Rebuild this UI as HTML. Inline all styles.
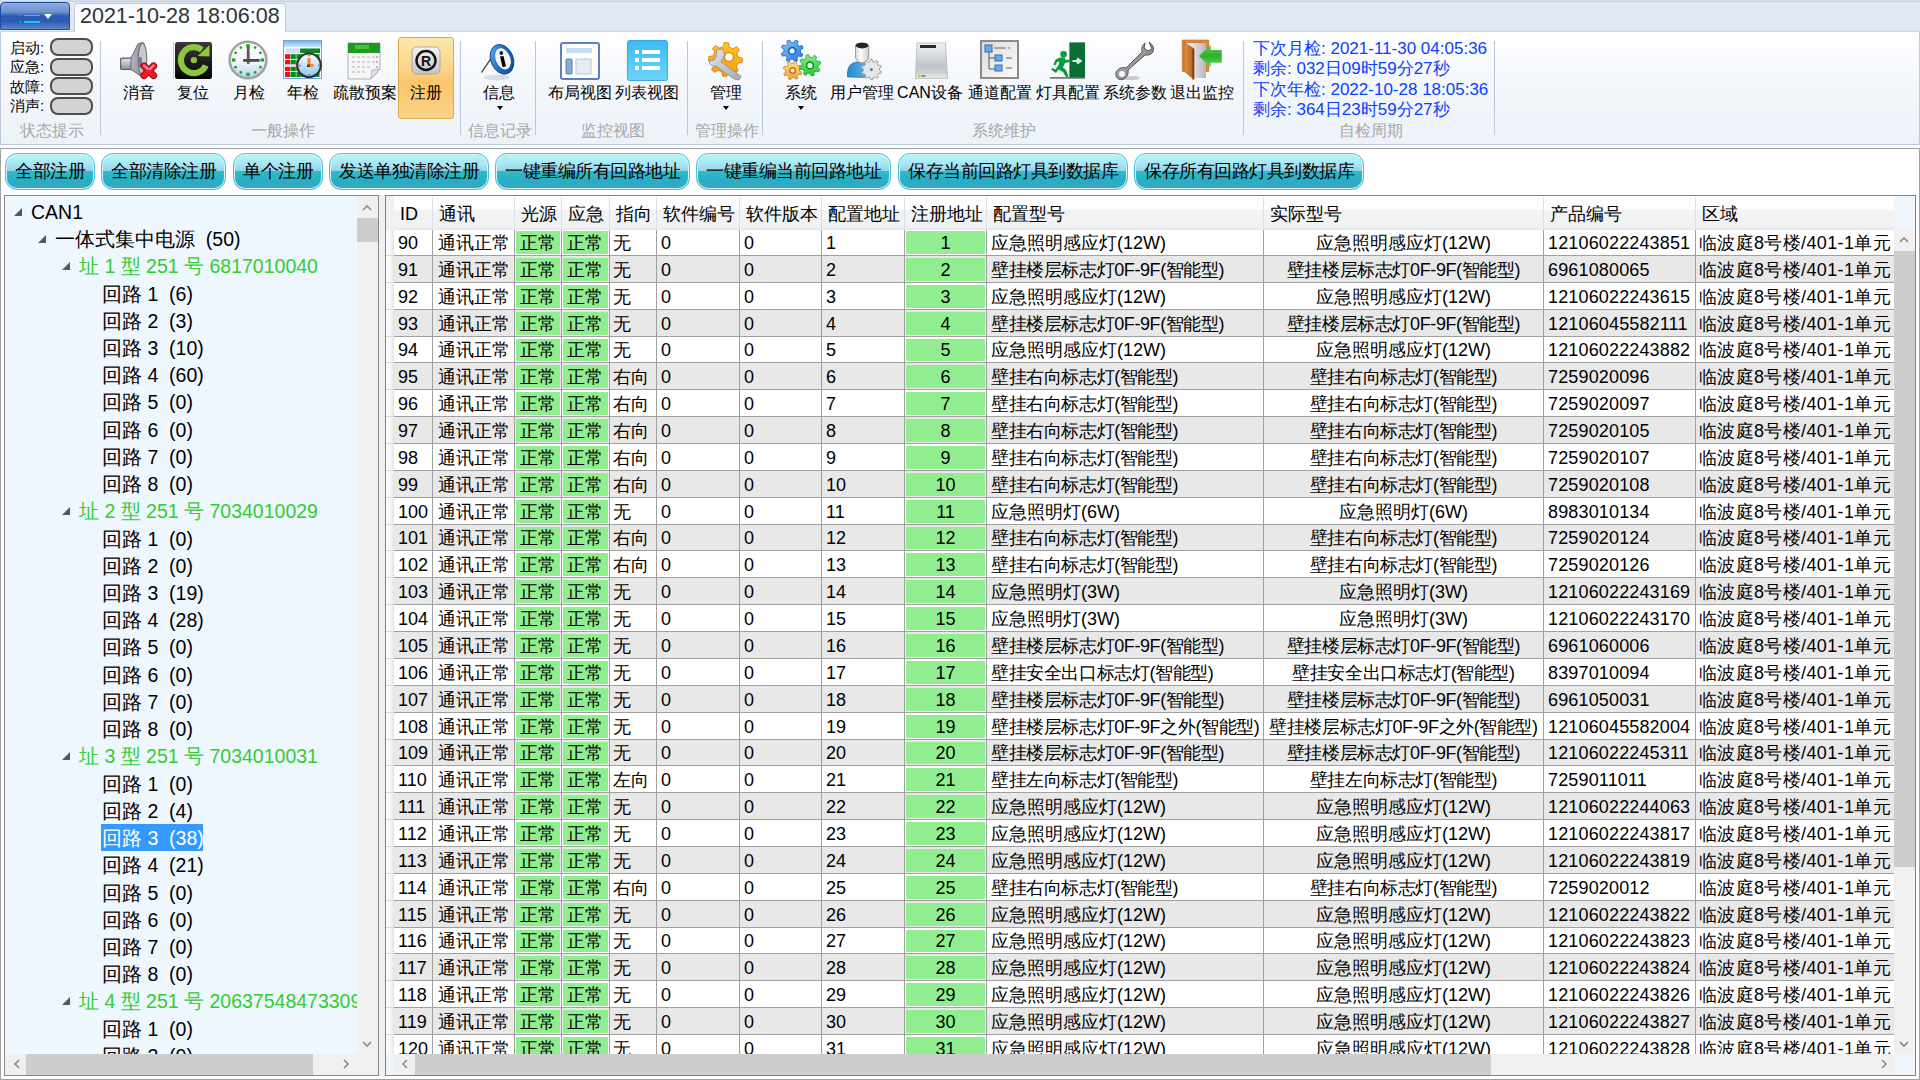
<!DOCTYPE html><html><head><meta charset="utf-8"><title>screen</title><style>
*{box-sizing:border-box}
html,body{margin:0;padding:0}
body{width:1920px;height:1080px;overflow:hidden;position:relative;background:#fff;font-family:"Liberation Sans",sans-serif;color:#000}
.a{position:absolute}
.t{position:absolute;white-space:pre;}
.c{position:absolute;white-space:pre;text-align:center}
.rl{position:absolute;white-space:pre;font-size:16px;line-height:16px;text-align:center;width:120px;color:#000}
.gl{position:absolute;white-space:pre;font-size:16px;line-height:16px;text-align:center;width:120px;color:#a7a7a7}
.sep{position:absolute;top:41px;width:1px;height:94px;background:#b8c8dc}
.led{position:absolute;left:50px;width:43px;height:18px;border:2px solid #4d4d4d;border-radius:8px;background:#d3d3d3}
.lab{position:absolute;left:10px;font-size:15px;line-height:16px;white-space:pre}
.btn{position:absolute;top:153px;height:37px;border:1px solid #4cc3dc;border-radius:12px;
 background:linear-gradient(#b8f5fc 0%,#a6e6f2 30%,#96d2e4 48%,#2cbccc 50%,#27afc4 75%,#3fa2bc 100%);
 box-shadow:inset 0 0 0 1px #d6f1f6;font-size:18px;letter-spacing:-0.5px;line-height:35px;text-align:center;white-space:pre;color:#000}
.tri{position:absolute;width:0;height:0;border-style:solid;border-width:0 0 8px 8px;border-color:transparent transparent #595959 transparent}
.ti{position:absolute;white-space:pre;font-size:19.5px;line-height:27px;height:27px}
.row{position:absolute;left:394px;width:1500px;overflow:hidden}
.cell{position:absolute;top:0;white-space:pre;font-size:18px;overflow:hidden}
.gc{position:absolute;background:#90ee90}
.vl{position:absolute;width:1px;background:#a0a0a0}
.hl{position:absolute;height:1px;background:#a0a0a0}
.hd{position:absolute;top:0;white-space:pre;font-size:18px;line-height:37px}
.hs{position:absolute;top:0;width:1px;height:33px;background:#dcdcdc}
.chev{position:absolute}
</style></head><body>
<div class="a" style="left:0;top:0;width:1920px;height:33px;background:#dfe8f4"></div>
<div class="a" style="left:0;top:0;width:1920px;height:1px;background:#d3dfec"></div>
<div class="a" style="left:0;top:1px;width:1920px;height:1px;background:#c3d2e3"></div>
<div class="a" style="left:0;top:31px;width:1920px;height:2px;background:#cbd8e7"></div>
<div class="a" style="left:0;top:2px;width:70px;height:28px;border:1.5px solid #1a4ea6;border-radius:4px 4px 0 0;background:linear-gradient(#93addc 0%,#6d90d0 35%,#2b5bb4 50%,#2a5ab2 70%,#5f86c8 100%)"></div>
<div class="a" style="left:24px;top:8.8px;width:16px;height:1.6px;background:#19c5ee"></div>
<div class="a" style="left:20px;top:8.8px;width:1px;height:1.6px;background:#19c5ee"></div>
<div class="a" style="left:24px;top:14.7px;width:16px;height:1.6px;background:#19c5ee"></div>
<div class="a" style="left:20px;top:14.7px;width:1px;height:1.6px;background:#19c5ee"></div>
<div class="a" style="left:24px;top:21.0px;width:16px;height:1.6px;background:#19c5ee"></div>
<div class="a" style="left:20px;top:21.0px;width:1px;height:1.6px;background:#19c5ee"></div>
<div class="a" style="left:44px;top:14px;width:0;height:0;border-left:4px solid transparent;border-right:4px solid transparent;border-top:5px solid #fff"></div>
<div class="a" style="left:74px;top:3px;width:212px;height:30px;border:1px solid #bccde0;border-bottom:none;border-radius:4px 4px 0 0;background:linear-gradient(#f7f9fc,#fdfeff)"></div>
<div class="t" style="left:80px;top:4px;font-size:21.5px;line-height:24px;color:#333">2021-10-28 18:06:08</div>
<div class="a" style="left:0;top:32px;width:1920px;height:113px;border:1px solid #bccbdd;border-top:none;background:linear-gradient(#ffffff 0%,#f5f8fc 35%,#edf2f9 100%)"></div>
<div class="led" style="top:38.0px"></div>
<div class="lab" style="top:39.5px">启动:</div>
<div class="led" style="top:57.6px"></div>
<div class="lab" style="top:59.1px">应急:</div>
<div class="led" style="top:77.2px"></div>
<div class="lab" style="top:78.7px">故障:</div>
<div class="led" style="top:96.8px"></div>
<div class="lab" style="top:98.3px">消声:</div>
<div class="sep" style="left:100px"></div>
<div class="sep" style="left:460px"></div>
<div class="sep" style="left:535px"></div>
<div class="sep" style="left:687px"></div>
<div class="sep" style="left:762px"></div>
<div class="sep" style="left:1243px"></div>
<div class="sep" style="left:1494px"></div>
<svg class="a" style="left:347px;top:42px" width="35" height="38" viewBox="0 0 35 38">
<path d="M1 1 L33 1 L33 27 L24 37 L1 37Z" fill="#f6f6f6" stroke="#b0b0b0"/>
<rect x="1" y="1" width="32" height="10" fill="#1c9a20"/>
<rect x="8" y="3" width="14" height="4" fill="#5cd04a" opacity=".7"/>
<g fill="#d4d4d4"><rect x="5" y="14" width="3" height="2"/><rect x="10" y="14" width="3" height="2"/><rect x="15" y="14" width="3" height="2"/><rect x="20" y="14" width="3" height="2"/><rect x="25" y="14" width="3" height="2"/>
<rect x="5" y="19" width="3" height="2"/><rect x="10" y="19" width="3" height="2"/><rect x="15" y="19" width="3" height="2"/><rect x="20" y="19" width="3" height="2"/><rect x="25" y="19" width="3" height="2"/>
<rect x="5" y="24" width="3" height="2"/><rect x="10" y="24" width="3" height="2"/><rect x="15" y="24" width="3" height="2"/><rect x="20" y="24" width="3" height="2"/>
<rect x="5" y="29" width="3" height="2"/><rect x="10" y="29" width="3" height="2"/><rect x="15" y="29" width="3" height="2"/></g>
<g fill="#c8a8f0"><rect x="29" y="14" width="2" height="2"/><rect x="29" y="19" width="2" height="2"/><rect x="29" y="24" width="2" height="2"/></g>
<path d="M33 27 L24 37 L25 28Z" fill="#dedede" stroke="#b0b0b0" stroke-width=".8"/>
</svg>
<div class="a" style="left:398px;top:37px;width:56px;height:82px;border:1px solid #d8ac48;border-radius:3px;background:linear-gradient(#fde7ac 0%,#fcd287 40%,#fbc56a 55%,#fcd388 100%)"></div>
<svg class="a" style="left:411px;top:46px" width="30" height="29" viewBox="0 0 30 29">
<defs><linearGradient id="rg" x1="0" y1="0" x2="0" y2="1"><stop offset="0" stop-color="#f4f4f4"/><stop offset="1" stop-color="#c4c4c4"/></linearGradient></defs>
<rect x="1" y="1" width="28" height="27" rx="5" fill="url(#rg)" stroke="#9a9a9a" stroke-width=".8"/>
<circle cx="15" cy="14.5" r="9.5" fill="none" stroke="#111" stroke-width="2.4"/>
<text x="15" y="19.5" font-family="Liberation Sans" font-weight="bold" font-size="14" text-anchor="middle" fill="#111">R</text>
</svg>
<svg class="a" style="left:560px;top:42px" width="41" height="38" viewBox="0 0 41 38">
<rect x="1" y="1" width="38" height="36" rx="2" fill="#fff" stroke="#5b80bc" stroke-width="2"/>
<rect x="6" y="6" width="26" height="5" rx="1" fill="#c4dcf4"/>
<rect x="6" y="17" width="6" height="15" rx="1" fill="#8aaad6" stroke="#5878b0"/>
<rect x="16" y="17" width="15" height="15" fill="#e6ecf6" stroke="#b8c4d4"/>
</svg>
<svg class="a" style="left:627px;top:40px" width="41" height="41" viewBox="0 0 41 41">
<defs><linearGradient id="lg" x1="0" y1="0" x2="0" y2="1"><stop offset="0" stop-color="#3cbcf4"/><stop offset="1" stop-color="#6cd4fa"/></linearGradient></defs>
<rect x="0.5" y="0.5" width="40" height="40" rx="2" fill="url(#lg)" stroke="#38a8e4"/>
<g fill="#fff"><rect x="8" y="10" width="4" height="4"/><rect x="15" y="10" width="18" height="4"/><rect x="8" y="18" width="4" height="4"/><rect x="15" y="18" width="18" height="4"/><rect x="8" y="26" width="4" height="4"/><rect x="15" y="26" width="18" height="4"/></g>
</svg>
<svg class="a" style="left:980px;top:40px" width="40" height="39" viewBox="0 0 40 39">
<defs><linearGradient id="chg" x1="0" y1="0" x2="1" y2="1"><stop offset="0" stop-color="#dcdcdc"/><stop offset="1" stop-color="#fafafa"/></linearGradient></defs>
<rect x="1" y="1" width="37" height="37" fill="url(#chg)" stroke="#8a8a8a" stroke-width="2"/>
<path d="M9 9 L9 29 M9 18 L16 18 M9 29 L16 29" stroke="#555" stroke-width="1" fill="none"/>
<g fill="#6aa8e6" stroke="#2e6cb8"><rect x="5" y="5" width="7" height="7"/><rect x="15" y="15" width="7" height="6"/><rect x="15" y="25" width="7" height="6"/></g>
<g stroke="#666" stroke-width="1"><line x1="14" y1="8" x2="26" y2="8"/><line x1="28" y1="8" x2="30" y2="8"/><line x1="26" y1="18" x2="32" y2="18"/><line x1="26" y1="28" x2="32" y2="28"/></g>
</svg>
<svg class="a" style="left:1115px;top:40px" width="41" height="42" viewBox="0 0 41 42">
<defs><linearGradient id="wg" x1="0" y1="0" x2="1" y2="1"><stop offset="0" stop-color="#c8c8c8"/><stop offset="1" stop-color="#6a6a6a"/></linearGradient></defs>
<path d="M34 2 Q40 6 38 12 Q35 16 30 15 L13 30 Q14 36 9 39 Q3 41 1 36 Q0 30 6 28 Q9 27 11 28 L27 12 Q26 6 30 3 L29 8 L33 11 L37 9Z" fill="url(#wg)" stroke="#555" stroke-width="1"/>
<circle cx="7" cy="34" r="3" fill="#f4f6fa"/>
<ellipse cx="16" cy="38" rx="9" ry="2" fill="#777" opacity=".35"/>
</svg>
<svg class="a" style="left:0;top:0" width="1920" height="150" viewBox="0 0 1920 150">
<defs>
<linearGradient id="spk2" x1="0" x2="0" y1="0" y2="1"><stop offset="0" stop-color="#e8e8f0"/><stop offset="1" stop-color="#8c8ca0"/></linearGradient>
<linearGradient id="cone2" x1="0" x2="1"><stop offset="0" stop-color="#dcdce6"/><stop offset="1" stop-color="#8a8a9c"/></linearGradient>
<linearGradient id="blk" x1="0" x2="0" y1="0" y2="1"><stop offset="0" stop-color="#3a3838"/><stop offset="1" stop-color="#050505"/></linearGradient>
<linearGradient id="face2" x1="0" x2="0" y1="0" y2="1"><stop offset="0" stop-color="#ffffff"/><stop offset="1" stop-color="#8cc4f0"/></linearGradient>
<linearGradient id="yhdr" x1="0" x2="0" y1="0" y2="1"><stop offset="0" stop-color="#7ab4ee"/><stop offset="1" stop-color="#cfe2f8"/></linearGradient>
<linearGradient id="infob" x1="0" x2="1" y1="0" y2="1"><stop offset="0" stop-color="#6ab4ea"/><stop offset=".5" stop-color="#1a6cc0"/><stop offset="1" stop-color="#0a4a94"/></linearGradient>
<linearGradient id="silver" x1="0" x2="1" y1="0" y2="1"><stop offset="0" stop-color="#e4e6ec"/><stop offset="1" stop-color="#a8aab4"/></linearGradient>
<linearGradient id="orng" x1="0" x2="0" y1="0" y2="1"><stop offset="0" stop-color="#ffc81a"/><stop offset="1" stop-color="#f49c10"/></linearGradient>
<linearGradient id="bgear" x1="0" x2="1" y1="0" y2="1"><stop offset="0" stop-color="#8ccaf4"/><stop offset="1" stop-color="#1a78dc"/></linearGradient>
<linearGradient id="ggear" x1="0" x2="0" y1="0" y2="1"><stop offset="0" stop-color="#8ee88e"/><stop offset="1" stop-color="#1ccc2a"/></linearGradient>
<linearGradient id="ogear" x1="0" x2="0" y1="0" y2="1"><stop offset="0" stop-color="#fde68a"/><stop offset="1" stop-color="#f0a030"/></linearGradient>
<linearGradient id="body" x1="0" x2="1"><stop offset="0" stop-color="#2a86d0"/><stop offset="1" stop-color="#5ab0ea"/></linearGradient>
<linearGradient id="head" x1="0" x2="1"><stop offset="0" stop-color="#d8d8d8"/><stop offset=".4" stop-color="#ffffff"/><stop offset="1" stop-color="#c8c8c8"/></linearGradient>
<linearGradient id="can2" x1="0" x2="0" y1="0" y2="1"><stop offset="0" stop-color="#f2f2f4"/><stop offset=".65" stop-color="#c0c4cc"/><stop offset="1" stop-color="#d8d8dc"/></linearGradient>
<linearGradient id="door2" x1="0" x2="1"><stop offset="0" stop-color="#f4f4f4"/><stop offset="1" stop-color="#b4b6bc"/></linearGradient>
<linearGradient id="leaf" x1="0" x2="1"><stop offset="0" stop-color="#e89040"/><stop offset="1" stop-color="#b8601c"/></linearGradient>
<linearGradient id="arw" x1="0" x2="0" y1="0" y2="1"><stop offset="0" stop-color="#5ccc54"/><stop offset=".5" stop-color="#2cb02c"/><stop offset="1" stop-color="#70d464"/></linearGradient>
</defs>
<path d="M120.5 59 Q120 58 122 58 L131 58 L138 44 Q141 42 144 43 L144 76 Q141 77 138 74 L131 69.5 L122 69.5 Q120.5 69.5 120.5 68Z" fill="url(#cone2)" stroke="#555" stroke-width="0.9"/>
<path d="M120.5 59 L131 58 L131 69.5 L121 69.5Z" fill="url(#spk2)" stroke="#555" stroke-width="0.8"/>
<ellipse cx="142.5" cy="59.5" rx="4.3" ry="16.3" fill="#c8c8d0" stroke="#666" stroke-width="1"/>
<rect x="138" y="57" width="4" height="10" rx="1.5" fill="#7a7a90"/>
<g stroke="#9a0c14" stroke-width="7.2" stroke-linecap="round"><line x1="144" y1="66" x2="153.5" y2="75.5"/><line x1="153.5" y1="66" x2="144" y2="75.5"/></g>
<g stroke="#f01c28" stroke-width="5.2" stroke-linecap="round"><line x1="144" y1="66" x2="153.5" y2="75.5"/><line x1="153.5" y1="66" x2="144" y2="75.5"/></g>
<g stroke="#ff9aa0" stroke-width="1.8" stroke-linecap="round"><line x1="144" y1="65.5" x2="148" y2="69"/><line x1="153.5" y1="65.5" x2="150" y2="69"/></g>
<rect x="173" y="42" width="1" height="37" fill="#c8c8cc"/>
<rect x="175" y="42" width="37" height="37" rx="2.5" fill="url(#blk)"/>
<path d="M201.90 49.86 A13 13 0 1 0 205.78 65.39" fill="none" stroke="#8cc63c" stroke-width="6.2"/>
<path d="M197.5 56 L209.5 45 L209.5 56.5Z" fill="#8cc63c"/>
<circle cx="193.9" cy="60.1" r="3.2" fill="#8cc63c"/>
<defs><linearGradient id="cface" x1="0" x2="0" y1="0" y2="1"><stop offset="0" stop-color="#ffffff"/><stop offset=".55" stop-color="#f2f6fc"/><stop offset="1" stop-color="#b4d2f2"/></linearGradient></defs>
<circle cx="248" cy="60" r="18.3" fill="url(#cface)" stroke="#a2a2a2" stroke-width="2.6"/>
<rect x="246.30" y="44.10" width="3.4" height="3.2" fill="#18a818"/>
<circle cx="255.15" cy="47.62" r="1.4" fill="#18a818"/>
<circle cx="260.38" cy="52.85" r="1.4" fill="#18a818"/>
<rect x="260.60" y="58.40" width="3.4" height="3.2" fill="#18a818"/>
<circle cx="260.38" cy="67.15" r="1.4" fill="#18a818"/>
<circle cx="255.15" cy="72.38" r="1.4" fill="#18a818"/>
<rect x="246.30" y="72.70" width="3.4" height="3.2" fill="#18a818"/>
<circle cx="240.85" cy="72.38" r="1.4" fill="#18a818"/>
<circle cx="235.62" cy="67.15" r="1.4" fill="#18a818"/>
<rect x="232.00" y="58.40" width="3.4" height="3.2" fill="#18a818"/>
<circle cx="235.62" cy="52.85" r="1.4" fill="#18a818"/>
<circle cx="240.85" cy="47.62" r="1.4" fill="#18a818"/>
<rect x="246.8" y="46.8" width="2.8" height="17" fill="#5a5a5a"/>
<rect x="243.2" y="59" width="16.5" height="2.8" fill="#4a4a4a"/>
<rect x="283.5" y="40.5" width="38" height="38" fill="#f4f8fe" stroke="#6aa6e8" stroke-width="1"/>
<rect x="284" y="41" width="37" height="6" fill="url(#yhdr)"/>
<rect x="286" y="48.5" width="13" height="4.5" fill="#cfdcf6"/>
<rect x="300" y="48.5" width="20" height="4.5" fill="#0a8a1a"/>
<rect x="285" y="54.2" width="5" height="4.7" fill="#f01010"/>
<rect x="290.5" y="54.2" width="29" height="4.7" fill="#0a8a1a"/>
<rect x="295.5" y="54.2" width="1.5" height="4.7" fill="#5cb86a"/>
<rect x="300.5" y="54.2" width="1.5" height="4.7" fill="#5cb86a"/>
<rect x="305.5" y="54.2" width="1.5" height="4.7" fill="#5cb86a"/>
<rect x="310.5" y="54.2" width="1.5" height="4.7" fill="#5cb86a"/>
<rect x="315.5" y="54.2" width="1.5" height="4.7" fill="#5cb86a"/>
<rect x="285" y="60.0" width="5" height="4.5" fill="#f01010"/>
<rect x="290.5" y="60.0" width="29" height="4.5" fill="#0a8a1a"/>
<rect x="295.5" y="60.0" width="1.5" height="4.5" fill="#5cb86a"/>
<rect x="300.5" y="60.0" width="1.5" height="4.5" fill="#5cb86a"/>
<rect x="305.5" y="60.0" width="1.5" height="4.5" fill="#5cb86a"/>
<rect x="310.5" y="60.0" width="1.5" height="4.5" fill="#5cb86a"/>
<rect x="315.5" y="60.0" width="1.5" height="4.5" fill="#5cb86a"/>
<rect x="285" y="67.0" width="5" height="4.0" fill="#f01010"/>
<rect x="290.5" y="67.0" width="29" height="4.0" fill="#0a8a1a"/>
<rect x="295.5" y="67.0" width="1.5" height="4.0" fill="#5cb86a"/>
<rect x="300.5" y="67.0" width="1.5" height="4.0" fill="#5cb86a"/>
<rect x="305.5" y="67.0" width="1.5" height="4.0" fill="#5cb86a"/>
<rect x="310.5" y="67.0" width="1.5" height="4.0" fill="#5cb86a"/>
<rect x="315.5" y="67.0" width="1.5" height="4.0" fill="#5cb86a"/>
<rect x="285" y="72.0" width="5" height="5.0" fill="#f01010"/>
<rect x="290.5" y="72.0" width="29" height="5.0" fill="#0a8a1a"/>
<rect x="295.5" y="72.0" width="1.5" height="5.0" fill="#5cb86a"/>
<rect x="300.5" y="72.0" width="1.5" height="5.0" fill="#5cb86a"/>
<rect x="305.5" y="72.0" width="1.5" height="5.0" fill="#5cb86a"/>
<rect x="310.5" y="72.0" width="1.5" height="5.0" fill="#5cb86a"/>
<rect x="315.5" y="72.0" width="1.5" height="5.0" fill="#5cb86a"/>
<rect x="285" y="64.5" width="35" height="2.5" fill="#ecd4dc"/>
<circle cx="309" cy="65.3" r="11.8" fill="url(#face2)" stroke="#333" stroke-width="2.2"/>
<g fill="#888"><rect x="308" y="55" width="2" height="1.5"/><rect x="308" y="74" width="2" height="1.5"/><rect x="299" y="64.5" width="1.5" height="2"/><rect x="318" y="64.5" width="1.5" height="2"/></g>
<rect x="307.5" y="58" width="3" height="8" fill="#f08a28"/><rect x="310" y="64" width="3.5" height="3" fill="#f08a28"/><rect x="307" y="64.5" width="3" height="2.5" fill="#445"/>
<ellipse cx="497" cy="77.5" rx="13" ry="2.8" fill="#cfd6e0" opacity=".8"/>
<path d="M492 57 L481.5 72.5" stroke="#333" stroke-width="1.3"/>
<ellipse cx="502" cy="59.3" rx="11.2" ry="15.4" transform="rotate(-22 502 59.3)" fill="url(#infob)" stroke="#0a3c80" stroke-width=".8"/>
<ellipse cx="503" cy="58.8" rx="7.2" ry="11" transform="rotate(-22 503 58.8)" fill="#f6f4f2"/>
<circle cx="501.3" cy="53" r="1.9" fill="#222"/>
<path d="M500 56.5 L503.5 56 L506 66.5 L502.5 67Z" fill="#000"/>
<path d="M738.30 57.24 L742.45 58.14 L742.23 62.53 L738.02 63.01 L736.15 66.96 L738.45 70.52 L735.19 73.47 L731.87 70.83 L727.76 72.30 L726.86 76.45 L722.47 76.23 L721.99 72.02 L718.04 70.15 L714.48 72.45 L711.53 69.19 L714.17 65.87 L712.70 61.76 L708.55 60.86 L708.77 56.47 L712.98 55.99 L714.85 52.04 L712.55 48.48 L715.81 45.53 L719.13 48.17 L723.24 46.70 L724.14 42.55 L728.53 42.77 L729.01 46.98 L732.96 48.85 L736.52 46.55 L739.47 49.81 L736.83 53.13Z" fill="url(#orng)" stroke="#d07810" stroke-width=".8"/>
<circle cx="729" cy="57" r="4.5" fill="#fff" stroke="#e08a10" stroke-width="1.5"/>
<path d="M716.5 49.5 L723 49 L724.5 55 L721 62 L741 76 L739 80 L734 79 L716 66 Q710 67 709 61 L714 60 Q717 58 716.5 49.5Z" fill="url(#silver)" stroke="#8a8c96" stroke-width=".8"/>
<path d="M800.43 52.57 L802.92 54.15 L801.73 56.79 L798.90 55.97 L796.84 57.90 L797.48 60.78 L794.77 61.80 L793.35 59.22 L790.53 59.13 L788.95 61.62 L786.31 60.43 L787.13 57.60 L785.20 55.54 L782.32 56.18 L781.30 53.47 L783.88 52.05 L783.97 49.23 L781.48 47.65 L782.67 45.01 L785.50 45.83 L787.56 43.90 L786.92 41.02 L789.63 40.00 L791.05 42.58 L793.87 42.67 L795.45 40.18 L798.09 41.37 L797.27 44.20 L799.20 46.26 L802.08 45.62 L803.10 48.33 L800.52 49.75Z" fill="url(#bgear)" stroke="#1060c0" stroke-width=".8"/>
<circle cx="792.2" cy="50.9" r="3.4" fill="#e8f4fc" stroke="#0a5ab8" stroke-width="1.6"/>
<path d="M799.57 71.20 L801.82 72.31 L801.05 74.62 L798.58 74.14 L797.03 75.92 L797.84 78.30 L795.66 79.39 L794.25 77.30 L791.90 77.47 L790.79 79.72 L788.48 78.95 L788.96 76.48 L787.18 74.93 L784.80 75.74 L783.71 73.56 L785.80 72.15 L785.63 69.80 L783.38 68.69 L784.15 66.38 L786.62 66.86 L788.17 65.08 L787.36 62.70 L789.54 61.61 L790.95 63.70 L793.30 63.53 L794.41 61.28 L796.72 62.05 L796.24 64.52 L798.02 66.07 L800.40 65.26 L801.49 67.44 L799.40 68.85Z" fill="url(#ogear)" stroke="#d08020" stroke-width=".8"/>
<circle cx="792.6" cy="70.5" r="2.8" fill="#f4f4f4" stroke="#c07018" stroke-width="1.4"/>
<path d="M817.83 67.82 L819.97 69.55 L818.58 71.97 L816.01 70.98 L813.83 72.65 L814.12 75.38 L811.42 76.11 L810.31 73.59 L807.58 73.23 L805.85 75.37 L803.43 73.98 L804.42 71.41 L802.75 69.23 L800.02 69.52 L799.29 66.82 L801.81 65.71 L802.17 62.98 L800.03 61.25 L801.42 58.83 L803.99 59.82 L806.17 58.15 L805.88 55.42 L808.58 54.69 L809.69 57.21 L812.42 57.57 L814.15 55.43 L816.57 56.82 L815.58 59.39 L817.25 61.57 L819.98 61.28 L820.71 63.98 L818.19 65.09Z" fill="url(#ggear)" stroke="#20a030" stroke-width=".8"/>
<circle cx="810" cy="65.4" r="3.4" fill="#e8f8e8" stroke="#1a8a2a" stroke-width="1.6"/>
<path d="M847.5 77 Q846.5 66 853 63 Q857 61.5 860 62 L866 62 L866 77.5Z" fill="url(#body)" stroke="#1a5a98" stroke-width=".6"/>
<path d="M855.5 46 Q855.5 43 862 43 Q868.8 43 868.8 46 L868.8 58 Q866 63 862 63 Q858 63 855.5 58Z" fill="url(#head)" stroke="#888" stroke-width=".8"/>
<ellipse cx="862" cy="45.6" rx="6.3" ry="2.8" fill="#222"/>
<path d="M879.56 70.42 L881.44 71.38 L880.86 73.41 L878.75 73.23 L877.52 75.06 L878.48 76.94 L876.82 78.24 L875.22 76.86 L873.14 77.61 L872.81 79.70 L870.70 79.78 L870.22 77.72 L868.10 77.11 L866.60 78.60 L864.85 77.42 L865.68 75.47 L864.32 73.73 L862.23 74.06 L861.51 72.08 L863.32 70.99 L863.24 68.78 L861.36 67.82 L861.94 65.79 L864.05 65.97 L865.28 64.14 L864.32 62.26 L865.98 60.96 L867.58 62.34 L869.66 61.59 L869.99 59.50 L872.10 59.42 L872.58 61.48 L874.70 62.09 L876.20 60.60 L877.95 61.78 L877.12 63.73 L878.48 65.47 L880.57 65.14 L881.29 67.12 L879.48 68.21Z" fill="#e6e6e6" stroke="#8a8a8a" stroke-width=".8"/>
<circle cx="871.4" cy="69.6" r="1.5" fill="#3a8ad0"/>
<path d="M917 43 L945.5 43 L947.5 78.5 L915.5 78.5Z" fill="url(#can2)" stroke="#b4b4b8" stroke-width=".8"/>
<rect x="920" y="45" width="16" height="3" fill="#2a2a2a"/>
<rect x="916" y="74.3" width="31" height="4" fill="#e0e0e2"/>
<rect x="918" y="74.8" width="2.6" height="2.6" fill="#b8e030"/><rect x="921.5" y="75" width="4" height="2" fill="#909090"/>
<rect x="1050" y="77" width="35" height="1.8" fill="#7a7a7a"/>
<rect x="1069.4" y="42.4" width="15.6" height="35" fill="#0a6e32"/>
<path d="M1072.5 61 L1079 61 M1077 58.5 L1080.5 61 L1077 63.5" stroke="#e4ece6" stroke-width="2.2" fill="none"/>
<circle cx="1063.6" cy="54.2" r="3.3" fill="#0a9a40"/>
<path d="M1060 57.5 L1064.5 57.5 L1066 60 L1069.5 59.5 L1069.5 62 L1065 63 L1063 67.5 L1066 70 L1068.5 76.5 L1066 77 L1063 72 L1058.5 69.5 L1056 73 L1051 69.5 L1052.5 68 L1055.5 69.5 L1058.5 65 L1059.5 61.5 L1057 62 L1055.5 65.5 L1053.5 64.5 L1055.5 59.5Z" fill="#0a9a40"/>
<path d="M1182.2 40 L1208.8 40 L1208.8 71.6 L1206 71.6 L1206 43 L1185 43 L1185 71.6 L1182.2 71.6Z" fill="#dd8a3c" stroke="#b86a24" stroke-width=".6"/>
<rect x="1188" y="43" width="18" height="35" fill="url(#door2)"/>
<path d="M1184 42.4 L1194 48.8 L1194 79.4 L1184 71Z" fill="url(#leaf)" stroke="#9a5018" stroke-width=".6"/>
<rect x="1192.3" y="48.8" width="1.8" height="30.6" fill="#7a4418"/>
<path d="M1199 56 L1210.7 45 L1210.7 50 L1221.8 50 L1221.8 62.8 L1210.7 62.8 L1210.7 67.5Z" fill="url(#arw)"/>
</svg>
<div class="rl" style="left:78.5px;top:85px">消音</div>
<div class="rl" style="left:133.0px;top:85px">复位</div>
<div class="rl" style="left:188.5px;top:85px">月检</div>
<div class="rl" style="left:243.0px;top:85px">年检</div>
<div class="rl" style="left:305.0px;top:85px">疏散预案</div>
<div class="rl" style="left:365.5px;top:85px">注册</div>
<div class="rl" style="left:438.5px;top:85px">信息</div>
<div class="rl" style="left:519.5px;top:85px">布局视图</div>
<div class="rl" style="left:586.5px;top:85px">列表视图</div>
<div class="rl" style="left:665.8px;top:85px">管理</div>
<div class="rl" style="left:740.8px;top:85px">系统</div>
<div class="rl" style="left:802.3px;top:85px">用户管理</div>
<div class="rl" style="left:870.0px;top:85px">CAN设备</div>
<div class="rl" style="left:939.5px;top:85px">通道配置</div>
<div class="rl" style="left:1007.5px;top:85px">灯具配置</div>
<div class="rl" style="left:1074.5px;top:85px">系统参数</div>
<div class="rl" style="left:1142.0px;top:85px">退出监控</div>
<div class="a" style="left:496.5px;top:106px;width:0;height:0;border-left:3.5px solid transparent;border-right:3.5px solid transparent;border-top:4px solid #000"></div>
<div class="a" style="left:723.0px;top:106px;width:0;height:0;border-left:3.5px solid transparent;border-right:3.5px solid transparent;border-top:4px solid #000"></div>
<div class="a" style="left:797.5px;top:106px;width:0;height:0;border-left:3.5px solid transparent;border-right:3.5px solid transparent;border-top:4px solid #000"></div>
<div class="gl" style="left:-8.0px;top:123px">状态提示</div>
<div class="gl" style="left:222.5px;top:123px">一般操作</div>
<div class="gl" style="left:439.7px;top:123px">信息记录</div>
<div class="gl" style="left:553.0px;top:123px">监控视图</div>
<div class="gl" style="left:667.0px;top:123px">管理操作</div>
<div class="gl" style="left:944.0px;top:123px">系统维护</div>
<div class="gl" style="left:1310.5px;top:123px">自检周期</div>
<div class="t" style="left:1253px;top:39.5px;font-size:17px;line-height:18px;color:#0a40ff">下次月检: 2021-11-30 04:05:36</div>
<div class="t" style="left:1253px;top:60.0px;font-size:17px;line-height:18px;color:#0a40ff">剩余: 032日09时59分27秒</div>
<div class="t" style="left:1253px;top:80.5px;font-size:17px;line-height:18px;color:#0a40ff">下次年检: 2022-10-28 18:05:36</div>
<div class="t" style="left:1253px;top:101.0px;font-size:17px;line-height:18px;color:#0a40ff">剩余: 364日23时59分27秒</div>
<div class="a" style="left:0;top:148px;width:1920px;height:932px;border:1px solid #a0a0a0"></div>
<div class="btn" style="left:5px;width:90px">全部注册</div>
<div class="btn" style="left:101px;width:125px">全部清除注册</div>
<div class="btn" style="left:233px;width:90px">单个注册</div>
<div class="btn" style="left:329px;width:160px">发送单独清除注册</div>
<div class="btn" style="left:495px;width:195px">一键重编所有回路地址</div>
<div class="btn" style="left:696px;width:195px">一键重编当前回路地址</div>
<div class="btn" style="left:898px;width:230px">保存当前回路灯具到数据库</div>
<div class="btn" style="left:1134px;width:230px">保存所有回路灯具到数据库</div>
<div class="a" style="left:379px;top:195px;width:6px;height:881px;background:#f0f0f0"></div>
<div class="a" style="left:4px;top:195px;width:375px;height:881px;border:1px solid #828790;background:#eef6fe;overflow:hidden">
<div class="tri" style="left:9px;top:11.8px"></div>
<div class="ti" style="left:26px;top:2.8px;color:#000">CAN1</div>
<div class="tri" style="left:33px;top:39.0px"></div>
<div class="ti" style="left:50px;top:30.0px;color:#000">一体式集中电源  (50)</div>
<div class="tri" style="left:57px;top:66.3px"></div>
<div class="ti" style="left:74px;top:57.3px;color:#32cd32">址 1 型 251 号 6817010040</div>
<div class="ti" style="left:97px;top:84.5px;color:#000">回路 1  (6)</div>
<div class="ti" style="left:97px;top:111.7px;color:#000">回路 2  (3)</div>
<div class="ti" style="left:97px;top:138.9px;color:#000">回路 3  (10)</div>
<div class="ti" style="left:97px;top:166.2px;color:#000">回路 4  (60)</div>
<div class="ti" style="left:97px;top:193.4px;color:#000">回路 5  (0)</div>
<div class="ti" style="left:97px;top:220.6px;color:#000">回路 6  (0)</div>
<div class="ti" style="left:97px;top:247.9px;color:#000">回路 7  (0)</div>
<div class="ti" style="left:97px;top:275.1px;color:#000">回路 8  (0)</div>
<div class="tri" style="left:57px;top:311.3px"></div>
<div class="ti" style="left:74px;top:302.3px;color:#32cd32">址 2 型 251 号 7034010029</div>
<div class="ti" style="left:97px;top:329.5px;color:#000">回路 1  (0)</div>
<div class="ti" style="left:97px;top:356.8px;color:#000">回路 2  (0)</div>
<div class="ti" style="left:97px;top:384.0px;color:#000">回路 3  (19)</div>
<div class="ti" style="left:97px;top:411.2px;color:#000">回路 4  (28)</div>
<div class="ti" style="left:97px;top:438.4px;color:#000">回路 5  (0)</div>
<div class="ti" style="left:97px;top:465.7px;color:#000">回路 6  (0)</div>
<div class="ti" style="left:97px;top:492.9px;color:#000">回路 7  (0)</div>
<div class="ti" style="left:97px;top:520.1px;color:#000">回路 8  (0)</div>
<div class="tri" style="left:57px;top:556.3px"></div>
<div class="ti" style="left:74px;top:547.3px;color:#32cd32">址 3 型 251 号 7034010031</div>
<div class="ti" style="left:97px;top:574.6px;color:#000">回路 1  (0)</div>
<div class="ti" style="left:97px;top:601.8px;color:#000">回路 2  (4)</div>
<div class="a" style="left:96px;top:628.4px;width:102px;height:27px;background:#3399ff"></div>
<div class="ti" style="left:97px;top:629.0px;color:#fff">回路 3  (38)</div>
<div class="ti" style="left:97px;top:656.2px;color:#000">回路 4  (21)</div>
<div class="ti" style="left:97px;top:683.5px;color:#000">回路 5  (0)</div>
<div class="ti" style="left:97px;top:710.7px;color:#000">回路 6  (0)</div>
<div class="ti" style="left:97px;top:737.9px;color:#000">回路 7  (0)</div>
<div class="ti" style="left:97px;top:765.1px;color:#000">回路 8  (0)</div>
<div class="tri" style="left:57px;top:801.4px"></div>
<div class="ti" style="left:74px;top:792.4px;color:#32cd32">址 4 型 251 号 20637548473309</div>
<div class="ti" style="left:97px;top:819.6px;color:#000">回路 1  (0)</div>
<div class="ti" style="left:97px;top:846.8px;color:#000">回路 2  (0)</div>
</div>
<div class="a" style="left:357px;top:196px;width:21px;height:858px;background:#f0f0f0"></div>
<div class="a" style="left:357px;top:218px;width:21px;height:24px;background:#cdcdcd"></div>
<div class="a" style="left:5px;top:1054px;width:373px;height:21px;background:#f0f0f0"></div>
<div class="a" style="left:26px;top:1054px;width:287px;height:21px;background:#cdcdcd"></div>
<svg class="a" style="left:0;top:0;pointer-events:none" width="1920" height="1080"><path d="M363.0 210.0 L367.0 206.0 L371.0 210.0" fill="none" stroke="#8a8a8a" stroke-width="1.6"/><path d="M363.0 1042.0 L367.0 1046.0 L371.0 1042.0" fill="none" stroke="#8a8a8a" stroke-width="1.6"/><path d="M19.0 1060.0 L15.0 1064.0 L19.0 1068.0" fill="none" stroke="#8a8a8a" stroke-width="1.6"/><path d="M344.0 1060.0 L348.0 1064.0 L344.0 1068.0" fill="none" stroke="#8a8a8a" stroke-width="1.6"/></svg>
<div class="a" style="left:385px;top:195px;width:1531px;height:881px;border:1px solid #5f86b6;background:#fff"></div>
<div class="a" style="left:386px;top:196px;width:8px;height:858px;background:linear-gradient(to right,#ffffff,#f6f6f6 60%,#e2e2e2)"></div>
<div class="a" style="left:386px;top:196px;width:8px;height:34px;background:#f0f0f0"></div>
<div class="a" style="left:386px;top:1054px;width:8px;height:21px;background:#eef5fc"></div>
<div class="a" style="left:394px;top:196px;width:1500px;height:34px;background:linear-gradient(#fdfdfd 0%,#fdfdfd 40%,#f1f2f4 42%,#f1f2f4 92%,#e2e3e6 100%)"></div>
<div class="hd" style="left:400px;top:196px">ID</div>
<div class="hd" style="left:439px;top:196px">通讯</div>
<div class="a" style="left:432px;top:197px;width:1px;height:32px;background:#dedfe2"></div>
<div class="hd" style="left:521px;top:196px">光源</div>
<div class="a" style="left:514px;top:197px;width:1px;height:32px;background:#dedfe2"></div>
<div class="hd" style="left:568px;top:196px">应急</div>
<div class="a" style="left:561px;top:197px;width:1px;height:32px;background:#dedfe2"></div>
<div class="hd" style="left:616px;top:196px">指向</div>
<div class="a" style="left:609px;top:197px;width:1px;height:32px;background:#dedfe2"></div>
<div class="hd" style="left:663px;top:196px">软件编号</div>
<div class="a" style="left:656px;top:197px;width:1px;height:32px;background:#dedfe2"></div>
<div class="hd" style="left:746px;top:196px">软件版本</div>
<div class="a" style="left:739px;top:197px;width:1px;height:32px;background:#dedfe2"></div>
<div class="hd" style="left:828px;top:196px">配置地址</div>
<div class="a" style="left:821px;top:197px;width:1px;height:32px;background:#dedfe2"></div>
<div class="hd" style="left:911px;top:196px">注册地址</div>
<div class="a" style="left:904px;top:197px;width:1px;height:32px;background:#dedfe2"></div>
<div class="hd" style="left:993px;top:196px">配置型号</div>
<div class="a" style="left:986px;top:197px;width:1px;height:32px;background:#dedfe2"></div>
<div class="hd" style="left:1270px;top:196px">实际型号</div>
<div class="a" style="left:1263px;top:197px;width:1px;height:32px;background:#dedfe2"></div>
<div class="hd" style="left:1550px;top:196px">产品编号</div>
<div class="a" style="left:1543px;top:197px;width:1px;height:32px;background:#dedfe2"></div>
<div class="hd" style="left:1702px;top:196px">区域</div>
<div class="a" style="left:1695px;top:197px;width:1px;height:32px;background:#dedfe2"></div>
<div class="a" style="left:1894px;top:196px;width:21px;height:34px;background:#eef5fc"></div>
<div class="a" style="left:386px;top:230px;width:1508px;height:824px;overflow:hidden">
<div class="a" style="left:8px;top:0px;width:1500px;height:25px;background:#ffffff"></div>
<div class="a" style="left:8px;top:25px;width:1500px;height:1px;background:#a0a0a0"></div>
<div class="a" style="left:0;top:25px;width:8px;height:1px;background:#dcdcdc"></div>
<div class="gc" style="left:130px;top:1px;width:44px;height:23px"></div>
<div class="gc" style="left:177px;top:1px;width:45px;height:23px"></div>
<div class="gc" style="left:520px;top:1px;width:79px;height:23px"></div>
<div class="vl" style="left:46px;top:0px;height:26px"></div>
<div class="vl" style="left:128px;top:0px;height:26px"></div>
<div class="vl" style="left:175px;top:0px;height:26px"></div>
<div class="vl" style="left:223px;top:0px;height:26px"></div>
<div class="vl" style="left:270px;top:0px;height:26px"></div>
<div class="vl" style="left:353px;top:0px;height:26px"></div>
<div class="vl" style="left:435px;top:0px;height:26px"></div>
<div class="vl" style="left:518px;top:0px;height:26px"></div>
<div class="vl" style="left:600px;top:0px;height:26px"></div>
<div class="vl" style="left:877px;top:0px;height:26px"></div>
<div class="vl" style="left:1157px;top:0px;height:26px"></div>
<div class="vl" style="left:1309px;top:0px;height:26px"></div>
<div class="cell" style="left:12px;top:0px;line-height:27px;height:25px;">90</div>
<div class="cell" style="left:52px;top:0px;line-height:27px;height:25px;">通讯正常</div>
<div class="cell" style="left:134px;top:0px;line-height:27px;height:25px;">正常</div>
<div class="cell" style="left:181px;top:0px;line-height:27px;height:25px;">正常</div>
<div class="cell" style="left:227px;top:0px;line-height:27px;height:25px;">无</div>
<div class="cell" style="left:275px;top:0px;line-height:27px;height:25px;">0</div>
<div class="cell" style="left:358px;top:0px;line-height:27px;height:25px;">0</div>
<div class="cell" style="left:440px;top:0px;line-height:27px;height:25px;">1</div>
<div class="cell" style="left:520px;top:0px;width:79px;text-align:center;line-height:27px;height:25px">1</div>
<div class="cell" style="left:605px;top:0px;line-height:27px;height:25px;">应急照明感应灯(12W)</div>
<div class="cell" style="left:878px;top:0px;width:279px;text-align:center;line-height:27px;height:25px;">应急照明感应灯(12W)</div>
<div class="cell" style="left:1162px;top:0px;line-height:27px;height:25px;letter-spacing:0.15px">12106022243851</div>
<div class="cell" style="left:1313px;top:0px;line-height:27px;height:25px;letter-spacing:0.35px">临波庭8号楼/401-1单元</div>
<div class="a" style="left:8px;top:26px;width:1500px;height:26px;background:#e8e8e8"></div>
<div class="a" style="left:8px;top:52px;width:1500px;height:1px;background:#a0a0a0"></div>
<div class="a" style="left:0;top:52px;width:8px;height:1px;background:#dcdcdc"></div>
<div class="gc" style="left:130px;top:28px;width:44px;height:23px"></div>
<div class="gc" style="left:177px;top:28px;width:45px;height:23px"></div>
<div class="gc" style="left:520px;top:28px;width:79px;height:23px"></div>
<div class="vl" style="left:46px;top:26px;height:27px"></div>
<div class="vl" style="left:128px;top:26px;height:27px"></div>
<div class="vl" style="left:175px;top:26px;height:27px"></div>
<div class="vl" style="left:223px;top:26px;height:27px"></div>
<div class="vl" style="left:270px;top:26px;height:27px"></div>
<div class="vl" style="left:353px;top:26px;height:27px"></div>
<div class="vl" style="left:435px;top:26px;height:27px"></div>
<div class="vl" style="left:518px;top:26px;height:27px"></div>
<div class="vl" style="left:600px;top:26px;height:27px"></div>
<div class="vl" style="left:877px;top:26px;height:27px"></div>
<div class="vl" style="left:1157px;top:26px;height:27px"></div>
<div class="vl" style="left:1309px;top:26px;height:27px"></div>
<div class="cell" style="left:12px;top:26px;line-height:28px;height:26px;">91</div>
<div class="cell" style="left:52px;top:26px;line-height:28px;height:26px;">通讯正常</div>
<div class="cell" style="left:134px;top:26px;line-height:28px;height:26px;">正常</div>
<div class="cell" style="left:181px;top:26px;line-height:28px;height:26px;">正常</div>
<div class="cell" style="left:227px;top:26px;line-height:28px;height:26px;">无</div>
<div class="cell" style="left:275px;top:26px;line-height:28px;height:26px;">0</div>
<div class="cell" style="left:358px;top:26px;line-height:28px;height:26px;">0</div>
<div class="cell" style="left:440px;top:26px;line-height:28px;height:26px;">2</div>
<div class="cell" style="left:520px;top:26px;width:79px;text-align:center;line-height:28px;height:26px">2</div>
<div class="cell" style="left:605px;top:26px;line-height:28px;height:26px;letter-spacing:-0.4px">壁挂楼层标志灯0F-9F(智能型)</div>
<div class="cell" style="left:878px;top:26px;width:279px;text-align:center;line-height:28px;height:26px;letter-spacing:-0.4px">壁挂楼层标志灯0F-9F(智能型)</div>
<div class="cell" style="left:1162px;top:26px;line-height:28px;height:26px;letter-spacing:0.15px">6961080065</div>
<div class="cell" style="left:1313px;top:26px;line-height:28px;height:26px;letter-spacing:0.35px">临波庭8号楼/401-1单元</div>
<div class="a" style="left:8px;top:53px;width:1500px;height:26px;background:#ffffff"></div>
<div class="a" style="left:8px;top:79px;width:1500px;height:1px;background:#a0a0a0"></div>
<div class="a" style="left:0;top:79px;width:8px;height:1px;background:#dcdcdc"></div>
<div class="gc" style="left:130px;top:55px;width:44px;height:23px"></div>
<div class="gc" style="left:177px;top:55px;width:45px;height:23px"></div>
<div class="gc" style="left:520px;top:55px;width:79px;height:23px"></div>
<div class="vl" style="left:46px;top:53px;height:27px"></div>
<div class="vl" style="left:128px;top:53px;height:27px"></div>
<div class="vl" style="left:175px;top:53px;height:27px"></div>
<div class="vl" style="left:223px;top:53px;height:27px"></div>
<div class="vl" style="left:270px;top:53px;height:27px"></div>
<div class="vl" style="left:353px;top:53px;height:27px"></div>
<div class="vl" style="left:435px;top:53px;height:27px"></div>
<div class="vl" style="left:518px;top:53px;height:27px"></div>
<div class="vl" style="left:600px;top:53px;height:27px"></div>
<div class="vl" style="left:877px;top:53px;height:27px"></div>
<div class="vl" style="left:1157px;top:53px;height:27px"></div>
<div class="vl" style="left:1309px;top:53px;height:27px"></div>
<div class="cell" style="left:12px;top:53px;line-height:28px;height:26px;">92</div>
<div class="cell" style="left:52px;top:53px;line-height:28px;height:26px;">通讯正常</div>
<div class="cell" style="left:134px;top:53px;line-height:28px;height:26px;">正常</div>
<div class="cell" style="left:181px;top:53px;line-height:28px;height:26px;">正常</div>
<div class="cell" style="left:227px;top:53px;line-height:28px;height:26px;">无</div>
<div class="cell" style="left:275px;top:53px;line-height:28px;height:26px;">0</div>
<div class="cell" style="left:358px;top:53px;line-height:28px;height:26px;">0</div>
<div class="cell" style="left:440px;top:53px;line-height:28px;height:26px;">3</div>
<div class="cell" style="left:520px;top:53px;width:79px;text-align:center;line-height:28px;height:26px">3</div>
<div class="cell" style="left:605px;top:53px;line-height:28px;height:26px;">应急照明感应灯(12W)</div>
<div class="cell" style="left:878px;top:53px;width:279px;text-align:center;line-height:28px;height:26px;">应急照明感应灯(12W)</div>
<div class="cell" style="left:1162px;top:53px;line-height:28px;height:26px;letter-spacing:0.15px">12106022243615</div>
<div class="cell" style="left:1313px;top:53px;line-height:28px;height:26px;letter-spacing:0.35px">临波庭8号楼/401-1单元</div>
<div class="a" style="left:8px;top:80px;width:1500px;height:26px;background:#e8e8e8"></div>
<div class="a" style="left:8px;top:106px;width:1500px;height:1px;background:#a0a0a0"></div>
<div class="a" style="left:0;top:106px;width:8px;height:1px;background:#dcdcdc"></div>
<div class="gc" style="left:130px;top:82px;width:44px;height:23px"></div>
<div class="gc" style="left:177px;top:82px;width:45px;height:23px"></div>
<div class="gc" style="left:520px;top:82px;width:79px;height:23px"></div>
<div class="vl" style="left:46px;top:80px;height:27px"></div>
<div class="vl" style="left:128px;top:80px;height:27px"></div>
<div class="vl" style="left:175px;top:80px;height:27px"></div>
<div class="vl" style="left:223px;top:80px;height:27px"></div>
<div class="vl" style="left:270px;top:80px;height:27px"></div>
<div class="vl" style="left:353px;top:80px;height:27px"></div>
<div class="vl" style="left:435px;top:80px;height:27px"></div>
<div class="vl" style="left:518px;top:80px;height:27px"></div>
<div class="vl" style="left:600px;top:80px;height:27px"></div>
<div class="vl" style="left:877px;top:80px;height:27px"></div>
<div class="vl" style="left:1157px;top:80px;height:27px"></div>
<div class="vl" style="left:1309px;top:80px;height:27px"></div>
<div class="cell" style="left:12px;top:80px;line-height:28px;height:26px;">93</div>
<div class="cell" style="left:52px;top:80px;line-height:28px;height:26px;">通讯正常</div>
<div class="cell" style="left:134px;top:80px;line-height:28px;height:26px;">正常</div>
<div class="cell" style="left:181px;top:80px;line-height:28px;height:26px;">正常</div>
<div class="cell" style="left:227px;top:80px;line-height:28px;height:26px;">无</div>
<div class="cell" style="left:275px;top:80px;line-height:28px;height:26px;">0</div>
<div class="cell" style="left:358px;top:80px;line-height:28px;height:26px;">0</div>
<div class="cell" style="left:440px;top:80px;line-height:28px;height:26px;">4</div>
<div class="cell" style="left:520px;top:80px;width:79px;text-align:center;line-height:28px;height:26px">4</div>
<div class="cell" style="left:605px;top:80px;line-height:28px;height:26px;letter-spacing:-0.4px">壁挂楼层标志灯0F-9F(智能型)</div>
<div class="cell" style="left:878px;top:80px;width:279px;text-align:center;line-height:28px;height:26px;letter-spacing:-0.4px">壁挂楼层标志灯0F-9F(智能型)</div>
<div class="cell" style="left:1162px;top:80px;line-height:28px;height:26px;letter-spacing:0.15px">12106045582111</div>
<div class="cell" style="left:1313px;top:80px;line-height:28px;height:26px;letter-spacing:0.35px">临波庭8号楼/401-1单元</div>
<div class="a" style="left:8px;top:107px;width:1500px;height:25px;background:#ffffff"></div>
<div class="a" style="left:8px;top:132px;width:1500px;height:1px;background:#a0a0a0"></div>
<div class="a" style="left:0;top:132px;width:8px;height:1px;background:#dcdcdc"></div>
<div class="gc" style="left:130px;top:109px;width:44px;height:22px"></div>
<div class="gc" style="left:177px;top:109px;width:45px;height:22px"></div>
<div class="gc" style="left:520px;top:109px;width:79px;height:22px"></div>
<div class="vl" style="left:46px;top:107px;height:26px"></div>
<div class="vl" style="left:128px;top:107px;height:26px"></div>
<div class="vl" style="left:175px;top:107px;height:26px"></div>
<div class="vl" style="left:223px;top:107px;height:26px"></div>
<div class="vl" style="left:270px;top:107px;height:26px"></div>
<div class="vl" style="left:353px;top:107px;height:26px"></div>
<div class="vl" style="left:435px;top:107px;height:26px"></div>
<div class="vl" style="left:518px;top:107px;height:26px"></div>
<div class="vl" style="left:600px;top:107px;height:26px"></div>
<div class="vl" style="left:877px;top:107px;height:26px"></div>
<div class="vl" style="left:1157px;top:107px;height:26px"></div>
<div class="vl" style="left:1309px;top:107px;height:26px"></div>
<div class="cell" style="left:12px;top:107px;line-height:27px;height:25px;">94</div>
<div class="cell" style="left:52px;top:107px;line-height:27px;height:25px;">通讯正常</div>
<div class="cell" style="left:134px;top:107px;line-height:27px;height:25px;">正常</div>
<div class="cell" style="left:181px;top:107px;line-height:27px;height:25px;">正常</div>
<div class="cell" style="left:227px;top:107px;line-height:27px;height:25px;">无</div>
<div class="cell" style="left:275px;top:107px;line-height:27px;height:25px;">0</div>
<div class="cell" style="left:358px;top:107px;line-height:27px;height:25px;">0</div>
<div class="cell" style="left:440px;top:107px;line-height:27px;height:25px;">5</div>
<div class="cell" style="left:520px;top:107px;width:79px;text-align:center;line-height:27px;height:25px">5</div>
<div class="cell" style="left:605px;top:107px;line-height:27px;height:25px;">应急照明感应灯(12W)</div>
<div class="cell" style="left:878px;top:107px;width:279px;text-align:center;line-height:27px;height:25px;">应急照明感应灯(12W)</div>
<div class="cell" style="left:1162px;top:107px;line-height:27px;height:25px;letter-spacing:0.15px">12106022243882</div>
<div class="cell" style="left:1313px;top:107px;line-height:27px;height:25px;letter-spacing:0.35px">临波庭8号楼/401-1单元</div>
<div class="a" style="left:8px;top:133px;width:1500px;height:26px;background:#e8e8e8"></div>
<div class="a" style="left:8px;top:159px;width:1500px;height:1px;background:#a0a0a0"></div>
<div class="a" style="left:0;top:159px;width:8px;height:1px;background:#dcdcdc"></div>
<div class="gc" style="left:130px;top:135px;width:44px;height:23px"></div>
<div class="gc" style="left:177px;top:135px;width:45px;height:23px"></div>
<div class="gc" style="left:520px;top:135px;width:79px;height:23px"></div>
<div class="vl" style="left:46px;top:133px;height:27px"></div>
<div class="vl" style="left:128px;top:133px;height:27px"></div>
<div class="vl" style="left:175px;top:133px;height:27px"></div>
<div class="vl" style="left:223px;top:133px;height:27px"></div>
<div class="vl" style="left:270px;top:133px;height:27px"></div>
<div class="vl" style="left:353px;top:133px;height:27px"></div>
<div class="vl" style="left:435px;top:133px;height:27px"></div>
<div class="vl" style="left:518px;top:133px;height:27px"></div>
<div class="vl" style="left:600px;top:133px;height:27px"></div>
<div class="vl" style="left:877px;top:133px;height:27px"></div>
<div class="vl" style="left:1157px;top:133px;height:27px"></div>
<div class="vl" style="left:1309px;top:133px;height:27px"></div>
<div class="cell" style="left:12px;top:133px;line-height:28px;height:26px;">95</div>
<div class="cell" style="left:52px;top:133px;line-height:28px;height:26px;">通讯正常</div>
<div class="cell" style="left:134px;top:133px;line-height:28px;height:26px;">正常</div>
<div class="cell" style="left:181px;top:133px;line-height:28px;height:26px;">正常</div>
<div class="cell" style="left:227px;top:133px;line-height:28px;height:26px;">右向</div>
<div class="cell" style="left:275px;top:133px;line-height:28px;height:26px;">0</div>
<div class="cell" style="left:358px;top:133px;line-height:28px;height:26px;">0</div>
<div class="cell" style="left:440px;top:133px;line-height:28px;height:26px;">6</div>
<div class="cell" style="left:520px;top:133px;width:79px;text-align:center;line-height:28px;height:26px">6</div>
<div class="cell" style="left:605px;top:133px;line-height:28px;height:26px;letter-spacing:-0.4px">壁挂右向标志灯(智能型)</div>
<div class="cell" style="left:878px;top:133px;width:279px;text-align:center;line-height:28px;height:26px;letter-spacing:-0.4px">壁挂右向标志灯(智能型)</div>
<div class="cell" style="left:1162px;top:133px;line-height:28px;height:26px;letter-spacing:0.15px">7259020096</div>
<div class="cell" style="left:1313px;top:133px;line-height:28px;height:26px;letter-spacing:0.35px">临波庭8号楼/401-1单元</div>
<div class="a" style="left:8px;top:160px;width:1500px;height:26px;background:#ffffff"></div>
<div class="a" style="left:8px;top:186px;width:1500px;height:1px;background:#a0a0a0"></div>
<div class="a" style="left:0;top:186px;width:8px;height:1px;background:#dcdcdc"></div>
<div class="gc" style="left:130px;top:162px;width:44px;height:23px"></div>
<div class="gc" style="left:177px;top:162px;width:45px;height:23px"></div>
<div class="gc" style="left:520px;top:162px;width:79px;height:23px"></div>
<div class="vl" style="left:46px;top:160px;height:27px"></div>
<div class="vl" style="left:128px;top:160px;height:27px"></div>
<div class="vl" style="left:175px;top:160px;height:27px"></div>
<div class="vl" style="left:223px;top:160px;height:27px"></div>
<div class="vl" style="left:270px;top:160px;height:27px"></div>
<div class="vl" style="left:353px;top:160px;height:27px"></div>
<div class="vl" style="left:435px;top:160px;height:27px"></div>
<div class="vl" style="left:518px;top:160px;height:27px"></div>
<div class="vl" style="left:600px;top:160px;height:27px"></div>
<div class="vl" style="left:877px;top:160px;height:27px"></div>
<div class="vl" style="left:1157px;top:160px;height:27px"></div>
<div class="vl" style="left:1309px;top:160px;height:27px"></div>
<div class="cell" style="left:12px;top:160px;line-height:28px;height:26px;">96</div>
<div class="cell" style="left:52px;top:160px;line-height:28px;height:26px;">通讯正常</div>
<div class="cell" style="left:134px;top:160px;line-height:28px;height:26px;">正常</div>
<div class="cell" style="left:181px;top:160px;line-height:28px;height:26px;">正常</div>
<div class="cell" style="left:227px;top:160px;line-height:28px;height:26px;">右向</div>
<div class="cell" style="left:275px;top:160px;line-height:28px;height:26px;">0</div>
<div class="cell" style="left:358px;top:160px;line-height:28px;height:26px;">0</div>
<div class="cell" style="left:440px;top:160px;line-height:28px;height:26px;">7</div>
<div class="cell" style="left:520px;top:160px;width:79px;text-align:center;line-height:28px;height:26px">7</div>
<div class="cell" style="left:605px;top:160px;line-height:28px;height:26px;letter-spacing:-0.4px">壁挂右向标志灯(智能型)</div>
<div class="cell" style="left:878px;top:160px;width:279px;text-align:center;line-height:28px;height:26px;letter-spacing:-0.4px">壁挂右向标志灯(智能型)</div>
<div class="cell" style="left:1162px;top:160px;line-height:28px;height:26px;letter-spacing:0.15px">7259020097</div>
<div class="cell" style="left:1313px;top:160px;line-height:28px;height:26px;letter-spacing:0.35px">临波庭8号楼/401-1单元</div>
<div class="a" style="left:8px;top:187px;width:1500px;height:26px;background:#e8e8e8"></div>
<div class="a" style="left:8px;top:213px;width:1500px;height:1px;background:#a0a0a0"></div>
<div class="a" style="left:0;top:213px;width:8px;height:1px;background:#dcdcdc"></div>
<div class="gc" style="left:130px;top:189px;width:44px;height:23px"></div>
<div class="gc" style="left:177px;top:189px;width:45px;height:23px"></div>
<div class="gc" style="left:520px;top:189px;width:79px;height:23px"></div>
<div class="vl" style="left:46px;top:187px;height:27px"></div>
<div class="vl" style="left:128px;top:187px;height:27px"></div>
<div class="vl" style="left:175px;top:187px;height:27px"></div>
<div class="vl" style="left:223px;top:187px;height:27px"></div>
<div class="vl" style="left:270px;top:187px;height:27px"></div>
<div class="vl" style="left:353px;top:187px;height:27px"></div>
<div class="vl" style="left:435px;top:187px;height:27px"></div>
<div class="vl" style="left:518px;top:187px;height:27px"></div>
<div class="vl" style="left:600px;top:187px;height:27px"></div>
<div class="vl" style="left:877px;top:187px;height:27px"></div>
<div class="vl" style="left:1157px;top:187px;height:27px"></div>
<div class="vl" style="left:1309px;top:187px;height:27px"></div>
<div class="cell" style="left:12px;top:187px;line-height:28px;height:26px;">97</div>
<div class="cell" style="left:52px;top:187px;line-height:28px;height:26px;">通讯正常</div>
<div class="cell" style="left:134px;top:187px;line-height:28px;height:26px;">正常</div>
<div class="cell" style="left:181px;top:187px;line-height:28px;height:26px;">正常</div>
<div class="cell" style="left:227px;top:187px;line-height:28px;height:26px;">右向</div>
<div class="cell" style="left:275px;top:187px;line-height:28px;height:26px;">0</div>
<div class="cell" style="left:358px;top:187px;line-height:28px;height:26px;">0</div>
<div class="cell" style="left:440px;top:187px;line-height:28px;height:26px;">8</div>
<div class="cell" style="left:520px;top:187px;width:79px;text-align:center;line-height:28px;height:26px">8</div>
<div class="cell" style="left:605px;top:187px;line-height:28px;height:26px;letter-spacing:-0.4px">壁挂右向标志灯(智能型)</div>
<div class="cell" style="left:878px;top:187px;width:279px;text-align:center;line-height:28px;height:26px;letter-spacing:-0.4px">壁挂右向标志灯(智能型)</div>
<div class="cell" style="left:1162px;top:187px;line-height:28px;height:26px;letter-spacing:0.15px">7259020105</div>
<div class="cell" style="left:1313px;top:187px;line-height:28px;height:26px;letter-spacing:0.35px">临波庭8号楼/401-1单元</div>
<div class="a" style="left:8px;top:214px;width:1500px;height:26px;background:#ffffff"></div>
<div class="a" style="left:8px;top:240px;width:1500px;height:1px;background:#a0a0a0"></div>
<div class="a" style="left:0;top:240px;width:8px;height:1px;background:#dcdcdc"></div>
<div class="gc" style="left:130px;top:216px;width:44px;height:23px"></div>
<div class="gc" style="left:177px;top:216px;width:45px;height:23px"></div>
<div class="gc" style="left:520px;top:216px;width:79px;height:23px"></div>
<div class="vl" style="left:46px;top:214px;height:27px"></div>
<div class="vl" style="left:128px;top:214px;height:27px"></div>
<div class="vl" style="left:175px;top:214px;height:27px"></div>
<div class="vl" style="left:223px;top:214px;height:27px"></div>
<div class="vl" style="left:270px;top:214px;height:27px"></div>
<div class="vl" style="left:353px;top:214px;height:27px"></div>
<div class="vl" style="left:435px;top:214px;height:27px"></div>
<div class="vl" style="left:518px;top:214px;height:27px"></div>
<div class="vl" style="left:600px;top:214px;height:27px"></div>
<div class="vl" style="left:877px;top:214px;height:27px"></div>
<div class="vl" style="left:1157px;top:214px;height:27px"></div>
<div class="vl" style="left:1309px;top:214px;height:27px"></div>
<div class="cell" style="left:12px;top:214px;line-height:28px;height:26px;">98</div>
<div class="cell" style="left:52px;top:214px;line-height:28px;height:26px;">通讯正常</div>
<div class="cell" style="left:134px;top:214px;line-height:28px;height:26px;">正常</div>
<div class="cell" style="left:181px;top:214px;line-height:28px;height:26px;">正常</div>
<div class="cell" style="left:227px;top:214px;line-height:28px;height:26px;">右向</div>
<div class="cell" style="left:275px;top:214px;line-height:28px;height:26px;">0</div>
<div class="cell" style="left:358px;top:214px;line-height:28px;height:26px;">0</div>
<div class="cell" style="left:440px;top:214px;line-height:28px;height:26px;">9</div>
<div class="cell" style="left:520px;top:214px;width:79px;text-align:center;line-height:28px;height:26px">9</div>
<div class="cell" style="left:605px;top:214px;line-height:28px;height:26px;letter-spacing:-0.4px">壁挂右向标志灯(智能型)</div>
<div class="cell" style="left:878px;top:214px;width:279px;text-align:center;line-height:28px;height:26px;letter-spacing:-0.4px">壁挂右向标志灯(智能型)</div>
<div class="cell" style="left:1162px;top:214px;line-height:28px;height:26px;letter-spacing:0.15px">7259020107</div>
<div class="cell" style="left:1313px;top:214px;line-height:28px;height:26px;letter-spacing:0.35px">临波庭8号楼/401-1单元</div>
<div class="a" style="left:8px;top:241px;width:1500px;height:26px;background:#e8e8e8"></div>
<div class="a" style="left:8px;top:267px;width:1500px;height:1px;background:#a0a0a0"></div>
<div class="a" style="left:0;top:267px;width:8px;height:1px;background:#dcdcdc"></div>
<div class="gc" style="left:130px;top:243px;width:44px;height:23px"></div>
<div class="gc" style="left:177px;top:243px;width:45px;height:23px"></div>
<div class="gc" style="left:520px;top:243px;width:79px;height:23px"></div>
<div class="vl" style="left:46px;top:241px;height:27px"></div>
<div class="vl" style="left:128px;top:241px;height:27px"></div>
<div class="vl" style="left:175px;top:241px;height:27px"></div>
<div class="vl" style="left:223px;top:241px;height:27px"></div>
<div class="vl" style="left:270px;top:241px;height:27px"></div>
<div class="vl" style="left:353px;top:241px;height:27px"></div>
<div class="vl" style="left:435px;top:241px;height:27px"></div>
<div class="vl" style="left:518px;top:241px;height:27px"></div>
<div class="vl" style="left:600px;top:241px;height:27px"></div>
<div class="vl" style="left:877px;top:241px;height:27px"></div>
<div class="vl" style="left:1157px;top:241px;height:27px"></div>
<div class="vl" style="left:1309px;top:241px;height:27px"></div>
<div class="cell" style="left:12px;top:241px;line-height:28px;height:26px;">99</div>
<div class="cell" style="left:52px;top:241px;line-height:28px;height:26px;">通讯正常</div>
<div class="cell" style="left:134px;top:241px;line-height:28px;height:26px;">正常</div>
<div class="cell" style="left:181px;top:241px;line-height:28px;height:26px;">正常</div>
<div class="cell" style="left:227px;top:241px;line-height:28px;height:26px;">右向</div>
<div class="cell" style="left:275px;top:241px;line-height:28px;height:26px;">0</div>
<div class="cell" style="left:358px;top:241px;line-height:28px;height:26px;">0</div>
<div class="cell" style="left:440px;top:241px;line-height:28px;height:26px;">10</div>
<div class="cell" style="left:520px;top:241px;width:79px;text-align:center;line-height:28px;height:26px">10</div>
<div class="cell" style="left:605px;top:241px;line-height:28px;height:26px;letter-spacing:-0.4px">壁挂右向标志灯(智能型)</div>
<div class="cell" style="left:878px;top:241px;width:279px;text-align:center;line-height:28px;height:26px;letter-spacing:-0.4px">壁挂右向标志灯(智能型)</div>
<div class="cell" style="left:1162px;top:241px;line-height:28px;height:26px;letter-spacing:0.15px">7259020108</div>
<div class="cell" style="left:1313px;top:241px;line-height:28px;height:26px;letter-spacing:0.35px">临波庭8号楼/401-1单元</div>
<div class="a" style="left:8px;top:268px;width:1500px;height:26px;background:#ffffff"></div>
<div class="a" style="left:8px;top:294px;width:1500px;height:1px;background:#a0a0a0"></div>
<div class="a" style="left:0;top:294px;width:8px;height:1px;background:#dcdcdc"></div>
<div class="gc" style="left:130px;top:270px;width:44px;height:23px"></div>
<div class="gc" style="left:177px;top:270px;width:45px;height:23px"></div>
<div class="gc" style="left:520px;top:270px;width:79px;height:23px"></div>
<div class="vl" style="left:46px;top:268px;height:27px"></div>
<div class="vl" style="left:128px;top:268px;height:27px"></div>
<div class="vl" style="left:175px;top:268px;height:27px"></div>
<div class="vl" style="left:223px;top:268px;height:27px"></div>
<div class="vl" style="left:270px;top:268px;height:27px"></div>
<div class="vl" style="left:353px;top:268px;height:27px"></div>
<div class="vl" style="left:435px;top:268px;height:27px"></div>
<div class="vl" style="left:518px;top:268px;height:27px"></div>
<div class="vl" style="left:600px;top:268px;height:27px"></div>
<div class="vl" style="left:877px;top:268px;height:27px"></div>
<div class="vl" style="left:1157px;top:268px;height:27px"></div>
<div class="vl" style="left:1309px;top:268px;height:27px"></div>
<div class="cell" style="left:12px;top:268px;line-height:28px;height:26px;">100</div>
<div class="cell" style="left:52px;top:268px;line-height:28px;height:26px;">通讯正常</div>
<div class="cell" style="left:134px;top:268px;line-height:28px;height:26px;">正常</div>
<div class="cell" style="left:181px;top:268px;line-height:28px;height:26px;">正常</div>
<div class="cell" style="left:227px;top:268px;line-height:28px;height:26px;">无</div>
<div class="cell" style="left:275px;top:268px;line-height:28px;height:26px;">0</div>
<div class="cell" style="left:358px;top:268px;line-height:28px;height:26px;">0</div>
<div class="cell" style="left:440px;top:268px;line-height:28px;height:26px;">11</div>
<div class="cell" style="left:520px;top:268px;width:79px;text-align:center;line-height:28px;height:26px">11</div>
<div class="cell" style="left:605px;top:268px;line-height:28px;height:26px;">应急照明灯(6W)</div>
<div class="cell" style="left:878px;top:268px;width:279px;text-align:center;line-height:28px;height:26px;">应急照明灯(6W)</div>
<div class="cell" style="left:1162px;top:268px;line-height:28px;height:26px;letter-spacing:0.15px">8983010134</div>
<div class="cell" style="left:1313px;top:268px;line-height:28px;height:26px;letter-spacing:0.35px">临波庭8号楼/401-1单元</div>
<div class="a" style="left:8px;top:295px;width:1500px;height:25px;background:#e8e8e8"></div>
<div class="a" style="left:8px;top:320px;width:1500px;height:1px;background:#a0a0a0"></div>
<div class="a" style="left:0;top:320px;width:8px;height:1px;background:#dcdcdc"></div>
<div class="gc" style="left:130px;top:297px;width:44px;height:22px"></div>
<div class="gc" style="left:177px;top:297px;width:45px;height:22px"></div>
<div class="gc" style="left:520px;top:297px;width:79px;height:22px"></div>
<div class="vl" style="left:46px;top:295px;height:26px"></div>
<div class="vl" style="left:128px;top:295px;height:26px"></div>
<div class="vl" style="left:175px;top:295px;height:26px"></div>
<div class="vl" style="left:223px;top:295px;height:26px"></div>
<div class="vl" style="left:270px;top:295px;height:26px"></div>
<div class="vl" style="left:353px;top:295px;height:26px"></div>
<div class="vl" style="left:435px;top:295px;height:26px"></div>
<div class="vl" style="left:518px;top:295px;height:26px"></div>
<div class="vl" style="left:600px;top:295px;height:26px"></div>
<div class="vl" style="left:877px;top:295px;height:26px"></div>
<div class="vl" style="left:1157px;top:295px;height:26px"></div>
<div class="vl" style="left:1309px;top:295px;height:26px"></div>
<div class="cell" style="left:12px;top:295px;line-height:27px;height:25px;">101</div>
<div class="cell" style="left:52px;top:295px;line-height:27px;height:25px;">通讯正常</div>
<div class="cell" style="left:134px;top:295px;line-height:27px;height:25px;">正常</div>
<div class="cell" style="left:181px;top:295px;line-height:27px;height:25px;">正常</div>
<div class="cell" style="left:227px;top:295px;line-height:27px;height:25px;">右向</div>
<div class="cell" style="left:275px;top:295px;line-height:27px;height:25px;">0</div>
<div class="cell" style="left:358px;top:295px;line-height:27px;height:25px;">0</div>
<div class="cell" style="left:440px;top:295px;line-height:27px;height:25px;">12</div>
<div class="cell" style="left:520px;top:295px;width:79px;text-align:center;line-height:27px;height:25px">12</div>
<div class="cell" style="left:605px;top:295px;line-height:27px;height:25px;letter-spacing:-0.4px">壁挂右向标志灯(智能型)</div>
<div class="cell" style="left:878px;top:295px;width:279px;text-align:center;line-height:27px;height:25px;letter-spacing:-0.4px">壁挂右向标志灯(智能型)</div>
<div class="cell" style="left:1162px;top:295px;line-height:27px;height:25px;letter-spacing:0.15px">7259020124</div>
<div class="cell" style="left:1313px;top:295px;line-height:27px;height:25px;letter-spacing:0.35px">临波庭8号楼/401-1单元</div>
<div class="a" style="left:8px;top:321px;width:1500px;height:26px;background:#ffffff"></div>
<div class="a" style="left:8px;top:347px;width:1500px;height:1px;background:#a0a0a0"></div>
<div class="a" style="left:0;top:347px;width:8px;height:1px;background:#dcdcdc"></div>
<div class="gc" style="left:130px;top:323px;width:44px;height:23px"></div>
<div class="gc" style="left:177px;top:323px;width:45px;height:23px"></div>
<div class="gc" style="left:520px;top:323px;width:79px;height:23px"></div>
<div class="vl" style="left:46px;top:321px;height:27px"></div>
<div class="vl" style="left:128px;top:321px;height:27px"></div>
<div class="vl" style="left:175px;top:321px;height:27px"></div>
<div class="vl" style="left:223px;top:321px;height:27px"></div>
<div class="vl" style="left:270px;top:321px;height:27px"></div>
<div class="vl" style="left:353px;top:321px;height:27px"></div>
<div class="vl" style="left:435px;top:321px;height:27px"></div>
<div class="vl" style="left:518px;top:321px;height:27px"></div>
<div class="vl" style="left:600px;top:321px;height:27px"></div>
<div class="vl" style="left:877px;top:321px;height:27px"></div>
<div class="vl" style="left:1157px;top:321px;height:27px"></div>
<div class="vl" style="left:1309px;top:321px;height:27px"></div>
<div class="cell" style="left:12px;top:321px;line-height:28px;height:26px;">102</div>
<div class="cell" style="left:52px;top:321px;line-height:28px;height:26px;">通讯正常</div>
<div class="cell" style="left:134px;top:321px;line-height:28px;height:26px;">正常</div>
<div class="cell" style="left:181px;top:321px;line-height:28px;height:26px;">正常</div>
<div class="cell" style="left:227px;top:321px;line-height:28px;height:26px;">右向</div>
<div class="cell" style="left:275px;top:321px;line-height:28px;height:26px;">0</div>
<div class="cell" style="left:358px;top:321px;line-height:28px;height:26px;">0</div>
<div class="cell" style="left:440px;top:321px;line-height:28px;height:26px;">13</div>
<div class="cell" style="left:520px;top:321px;width:79px;text-align:center;line-height:28px;height:26px">13</div>
<div class="cell" style="left:605px;top:321px;line-height:28px;height:26px;letter-spacing:-0.4px">壁挂右向标志灯(智能型)</div>
<div class="cell" style="left:878px;top:321px;width:279px;text-align:center;line-height:28px;height:26px;letter-spacing:-0.4px">壁挂右向标志灯(智能型)</div>
<div class="cell" style="left:1162px;top:321px;line-height:28px;height:26px;letter-spacing:0.15px">7259020126</div>
<div class="cell" style="left:1313px;top:321px;line-height:28px;height:26px;letter-spacing:0.35px">临波庭8号楼/401-1单元</div>
<div class="a" style="left:8px;top:348px;width:1500px;height:26px;background:#e8e8e8"></div>
<div class="a" style="left:8px;top:374px;width:1500px;height:1px;background:#a0a0a0"></div>
<div class="a" style="left:0;top:374px;width:8px;height:1px;background:#dcdcdc"></div>
<div class="gc" style="left:130px;top:350px;width:44px;height:23px"></div>
<div class="gc" style="left:177px;top:350px;width:45px;height:23px"></div>
<div class="gc" style="left:520px;top:350px;width:79px;height:23px"></div>
<div class="vl" style="left:46px;top:348px;height:27px"></div>
<div class="vl" style="left:128px;top:348px;height:27px"></div>
<div class="vl" style="left:175px;top:348px;height:27px"></div>
<div class="vl" style="left:223px;top:348px;height:27px"></div>
<div class="vl" style="left:270px;top:348px;height:27px"></div>
<div class="vl" style="left:353px;top:348px;height:27px"></div>
<div class="vl" style="left:435px;top:348px;height:27px"></div>
<div class="vl" style="left:518px;top:348px;height:27px"></div>
<div class="vl" style="left:600px;top:348px;height:27px"></div>
<div class="vl" style="left:877px;top:348px;height:27px"></div>
<div class="vl" style="left:1157px;top:348px;height:27px"></div>
<div class="vl" style="left:1309px;top:348px;height:27px"></div>
<div class="cell" style="left:12px;top:348px;line-height:28px;height:26px;">103</div>
<div class="cell" style="left:52px;top:348px;line-height:28px;height:26px;">通讯正常</div>
<div class="cell" style="left:134px;top:348px;line-height:28px;height:26px;">正常</div>
<div class="cell" style="left:181px;top:348px;line-height:28px;height:26px;">正常</div>
<div class="cell" style="left:227px;top:348px;line-height:28px;height:26px;">无</div>
<div class="cell" style="left:275px;top:348px;line-height:28px;height:26px;">0</div>
<div class="cell" style="left:358px;top:348px;line-height:28px;height:26px;">0</div>
<div class="cell" style="left:440px;top:348px;line-height:28px;height:26px;">14</div>
<div class="cell" style="left:520px;top:348px;width:79px;text-align:center;line-height:28px;height:26px">14</div>
<div class="cell" style="left:605px;top:348px;line-height:28px;height:26px;">应急照明灯(3W)</div>
<div class="cell" style="left:878px;top:348px;width:279px;text-align:center;line-height:28px;height:26px;">应急照明灯(3W)</div>
<div class="cell" style="left:1162px;top:348px;line-height:28px;height:26px;letter-spacing:0.15px">12106022243169</div>
<div class="cell" style="left:1313px;top:348px;line-height:28px;height:26px;letter-spacing:0.35px">临波庭8号楼/401-1单元</div>
<div class="a" style="left:8px;top:375px;width:1500px;height:26px;background:#ffffff"></div>
<div class="a" style="left:8px;top:401px;width:1500px;height:1px;background:#a0a0a0"></div>
<div class="a" style="left:0;top:401px;width:8px;height:1px;background:#dcdcdc"></div>
<div class="gc" style="left:130px;top:377px;width:44px;height:23px"></div>
<div class="gc" style="left:177px;top:377px;width:45px;height:23px"></div>
<div class="gc" style="left:520px;top:377px;width:79px;height:23px"></div>
<div class="vl" style="left:46px;top:375px;height:27px"></div>
<div class="vl" style="left:128px;top:375px;height:27px"></div>
<div class="vl" style="left:175px;top:375px;height:27px"></div>
<div class="vl" style="left:223px;top:375px;height:27px"></div>
<div class="vl" style="left:270px;top:375px;height:27px"></div>
<div class="vl" style="left:353px;top:375px;height:27px"></div>
<div class="vl" style="left:435px;top:375px;height:27px"></div>
<div class="vl" style="left:518px;top:375px;height:27px"></div>
<div class="vl" style="left:600px;top:375px;height:27px"></div>
<div class="vl" style="left:877px;top:375px;height:27px"></div>
<div class="vl" style="left:1157px;top:375px;height:27px"></div>
<div class="vl" style="left:1309px;top:375px;height:27px"></div>
<div class="cell" style="left:12px;top:375px;line-height:28px;height:26px;">104</div>
<div class="cell" style="left:52px;top:375px;line-height:28px;height:26px;">通讯正常</div>
<div class="cell" style="left:134px;top:375px;line-height:28px;height:26px;">正常</div>
<div class="cell" style="left:181px;top:375px;line-height:28px;height:26px;">正常</div>
<div class="cell" style="left:227px;top:375px;line-height:28px;height:26px;">无</div>
<div class="cell" style="left:275px;top:375px;line-height:28px;height:26px;">0</div>
<div class="cell" style="left:358px;top:375px;line-height:28px;height:26px;">0</div>
<div class="cell" style="left:440px;top:375px;line-height:28px;height:26px;">15</div>
<div class="cell" style="left:520px;top:375px;width:79px;text-align:center;line-height:28px;height:26px">15</div>
<div class="cell" style="left:605px;top:375px;line-height:28px;height:26px;">应急照明灯(3W)</div>
<div class="cell" style="left:878px;top:375px;width:279px;text-align:center;line-height:28px;height:26px;">应急照明灯(3W)</div>
<div class="cell" style="left:1162px;top:375px;line-height:28px;height:26px;letter-spacing:0.15px">12106022243170</div>
<div class="cell" style="left:1313px;top:375px;line-height:28px;height:26px;letter-spacing:0.35px">临波庭8号楼/401-1单元</div>
<div class="a" style="left:8px;top:402px;width:1500px;height:26px;background:#e8e8e8"></div>
<div class="a" style="left:8px;top:428px;width:1500px;height:1px;background:#a0a0a0"></div>
<div class="a" style="left:0;top:428px;width:8px;height:1px;background:#dcdcdc"></div>
<div class="gc" style="left:130px;top:404px;width:44px;height:23px"></div>
<div class="gc" style="left:177px;top:404px;width:45px;height:23px"></div>
<div class="gc" style="left:520px;top:404px;width:79px;height:23px"></div>
<div class="vl" style="left:46px;top:402px;height:27px"></div>
<div class="vl" style="left:128px;top:402px;height:27px"></div>
<div class="vl" style="left:175px;top:402px;height:27px"></div>
<div class="vl" style="left:223px;top:402px;height:27px"></div>
<div class="vl" style="left:270px;top:402px;height:27px"></div>
<div class="vl" style="left:353px;top:402px;height:27px"></div>
<div class="vl" style="left:435px;top:402px;height:27px"></div>
<div class="vl" style="left:518px;top:402px;height:27px"></div>
<div class="vl" style="left:600px;top:402px;height:27px"></div>
<div class="vl" style="left:877px;top:402px;height:27px"></div>
<div class="vl" style="left:1157px;top:402px;height:27px"></div>
<div class="vl" style="left:1309px;top:402px;height:27px"></div>
<div class="cell" style="left:12px;top:402px;line-height:28px;height:26px;">105</div>
<div class="cell" style="left:52px;top:402px;line-height:28px;height:26px;">通讯正常</div>
<div class="cell" style="left:134px;top:402px;line-height:28px;height:26px;">正常</div>
<div class="cell" style="left:181px;top:402px;line-height:28px;height:26px;">正常</div>
<div class="cell" style="left:227px;top:402px;line-height:28px;height:26px;">无</div>
<div class="cell" style="left:275px;top:402px;line-height:28px;height:26px;">0</div>
<div class="cell" style="left:358px;top:402px;line-height:28px;height:26px;">0</div>
<div class="cell" style="left:440px;top:402px;line-height:28px;height:26px;">16</div>
<div class="cell" style="left:520px;top:402px;width:79px;text-align:center;line-height:28px;height:26px">16</div>
<div class="cell" style="left:605px;top:402px;line-height:28px;height:26px;letter-spacing:-0.4px">壁挂楼层标志灯0F-9F(智能型)</div>
<div class="cell" style="left:878px;top:402px;width:279px;text-align:center;line-height:28px;height:26px;letter-spacing:-0.4px">壁挂楼层标志灯0F-9F(智能型)</div>
<div class="cell" style="left:1162px;top:402px;line-height:28px;height:26px;letter-spacing:0.15px">6961060006</div>
<div class="cell" style="left:1313px;top:402px;line-height:28px;height:26px;letter-spacing:0.35px">临波庭8号楼/401-1单元</div>
<div class="a" style="left:8px;top:429px;width:1500px;height:26px;background:#ffffff"></div>
<div class="a" style="left:8px;top:455px;width:1500px;height:1px;background:#a0a0a0"></div>
<div class="a" style="left:0;top:455px;width:8px;height:1px;background:#dcdcdc"></div>
<div class="gc" style="left:130px;top:431px;width:44px;height:23px"></div>
<div class="gc" style="left:177px;top:431px;width:45px;height:23px"></div>
<div class="gc" style="left:520px;top:431px;width:79px;height:23px"></div>
<div class="vl" style="left:46px;top:429px;height:27px"></div>
<div class="vl" style="left:128px;top:429px;height:27px"></div>
<div class="vl" style="left:175px;top:429px;height:27px"></div>
<div class="vl" style="left:223px;top:429px;height:27px"></div>
<div class="vl" style="left:270px;top:429px;height:27px"></div>
<div class="vl" style="left:353px;top:429px;height:27px"></div>
<div class="vl" style="left:435px;top:429px;height:27px"></div>
<div class="vl" style="left:518px;top:429px;height:27px"></div>
<div class="vl" style="left:600px;top:429px;height:27px"></div>
<div class="vl" style="left:877px;top:429px;height:27px"></div>
<div class="vl" style="left:1157px;top:429px;height:27px"></div>
<div class="vl" style="left:1309px;top:429px;height:27px"></div>
<div class="cell" style="left:12px;top:429px;line-height:28px;height:26px;">106</div>
<div class="cell" style="left:52px;top:429px;line-height:28px;height:26px;">通讯正常</div>
<div class="cell" style="left:134px;top:429px;line-height:28px;height:26px;">正常</div>
<div class="cell" style="left:181px;top:429px;line-height:28px;height:26px;">正常</div>
<div class="cell" style="left:227px;top:429px;line-height:28px;height:26px;">无</div>
<div class="cell" style="left:275px;top:429px;line-height:28px;height:26px;">0</div>
<div class="cell" style="left:358px;top:429px;line-height:28px;height:26px;">0</div>
<div class="cell" style="left:440px;top:429px;line-height:28px;height:26px;">17</div>
<div class="cell" style="left:520px;top:429px;width:79px;text-align:center;line-height:28px;height:26px">17</div>
<div class="cell" style="left:605px;top:429px;line-height:28px;height:26px;letter-spacing:-0.4px">壁挂安全出口标志灯(智能型)</div>
<div class="cell" style="left:878px;top:429px;width:279px;text-align:center;line-height:28px;height:26px;letter-spacing:-0.4px">壁挂安全出口标志灯(智能型)</div>
<div class="cell" style="left:1162px;top:429px;line-height:28px;height:26px;letter-spacing:0.15px">8397010094</div>
<div class="cell" style="left:1313px;top:429px;line-height:28px;height:26px;letter-spacing:0.35px">临波庭8号楼/401-1单元</div>
<div class="a" style="left:8px;top:456px;width:1500px;height:26px;background:#e8e8e8"></div>
<div class="a" style="left:8px;top:482px;width:1500px;height:1px;background:#a0a0a0"></div>
<div class="a" style="left:0;top:482px;width:8px;height:1px;background:#dcdcdc"></div>
<div class="gc" style="left:130px;top:458px;width:44px;height:23px"></div>
<div class="gc" style="left:177px;top:458px;width:45px;height:23px"></div>
<div class="gc" style="left:520px;top:458px;width:79px;height:23px"></div>
<div class="vl" style="left:46px;top:456px;height:27px"></div>
<div class="vl" style="left:128px;top:456px;height:27px"></div>
<div class="vl" style="left:175px;top:456px;height:27px"></div>
<div class="vl" style="left:223px;top:456px;height:27px"></div>
<div class="vl" style="left:270px;top:456px;height:27px"></div>
<div class="vl" style="left:353px;top:456px;height:27px"></div>
<div class="vl" style="left:435px;top:456px;height:27px"></div>
<div class="vl" style="left:518px;top:456px;height:27px"></div>
<div class="vl" style="left:600px;top:456px;height:27px"></div>
<div class="vl" style="left:877px;top:456px;height:27px"></div>
<div class="vl" style="left:1157px;top:456px;height:27px"></div>
<div class="vl" style="left:1309px;top:456px;height:27px"></div>
<div class="cell" style="left:12px;top:456px;line-height:28px;height:26px;">107</div>
<div class="cell" style="left:52px;top:456px;line-height:28px;height:26px;">通讯正常</div>
<div class="cell" style="left:134px;top:456px;line-height:28px;height:26px;">正常</div>
<div class="cell" style="left:181px;top:456px;line-height:28px;height:26px;">正常</div>
<div class="cell" style="left:227px;top:456px;line-height:28px;height:26px;">无</div>
<div class="cell" style="left:275px;top:456px;line-height:28px;height:26px;">0</div>
<div class="cell" style="left:358px;top:456px;line-height:28px;height:26px;">0</div>
<div class="cell" style="left:440px;top:456px;line-height:28px;height:26px;">18</div>
<div class="cell" style="left:520px;top:456px;width:79px;text-align:center;line-height:28px;height:26px">18</div>
<div class="cell" style="left:605px;top:456px;line-height:28px;height:26px;letter-spacing:-0.4px">壁挂楼层标志灯0F-9F(智能型)</div>
<div class="cell" style="left:878px;top:456px;width:279px;text-align:center;line-height:28px;height:26px;letter-spacing:-0.4px">壁挂楼层标志灯0F-9F(智能型)</div>
<div class="cell" style="left:1162px;top:456px;line-height:28px;height:26px;letter-spacing:0.15px">6961050031</div>
<div class="cell" style="left:1313px;top:456px;line-height:28px;height:26px;letter-spacing:0.35px">临波庭8号楼/401-1单元</div>
<div class="a" style="left:8px;top:483px;width:1500px;height:26px;background:#ffffff"></div>
<div class="a" style="left:8px;top:509px;width:1500px;height:1px;background:#a0a0a0"></div>
<div class="a" style="left:0;top:509px;width:8px;height:1px;background:#dcdcdc"></div>
<div class="gc" style="left:130px;top:485px;width:44px;height:23px"></div>
<div class="gc" style="left:177px;top:485px;width:45px;height:23px"></div>
<div class="gc" style="left:520px;top:485px;width:79px;height:23px"></div>
<div class="vl" style="left:46px;top:483px;height:27px"></div>
<div class="vl" style="left:128px;top:483px;height:27px"></div>
<div class="vl" style="left:175px;top:483px;height:27px"></div>
<div class="vl" style="left:223px;top:483px;height:27px"></div>
<div class="vl" style="left:270px;top:483px;height:27px"></div>
<div class="vl" style="left:353px;top:483px;height:27px"></div>
<div class="vl" style="left:435px;top:483px;height:27px"></div>
<div class="vl" style="left:518px;top:483px;height:27px"></div>
<div class="vl" style="left:600px;top:483px;height:27px"></div>
<div class="vl" style="left:877px;top:483px;height:27px"></div>
<div class="vl" style="left:1157px;top:483px;height:27px"></div>
<div class="vl" style="left:1309px;top:483px;height:27px"></div>
<div class="cell" style="left:12px;top:483px;line-height:28px;height:26px;">108</div>
<div class="cell" style="left:52px;top:483px;line-height:28px;height:26px;">通讯正常</div>
<div class="cell" style="left:134px;top:483px;line-height:28px;height:26px;">正常</div>
<div class="cell" style="left:181px;top:483px;line-height:28px;height:26px;">正常</div>
<div class="cell" style="left:227px;top:483px;line-height:28px;height:26px;">无</div>
<div class="cell" style="left:275px;top:483px;line-height:28px;height:26px;">0</div>
<div class="cell" style="left:358px;top:483px;line-height:28px;height:26px;">0</div>
<div class="cell" style="left:440px;top:483px;line-height:28px;height:26px;">19</div>
<div class="cell" style="left:520px;top:483px;width:79px;text-align:center;line-height:28px;height:26px">19</div>
<div class="cell" style="left:605px;top:483px;line-height:28px;height:26px;letter-spacing:-0.4px">壁挂楼层标志灯0F-9F之外(智能型)</div>
<div class="cell" style="left:878px;top:483px;width:279px;text-align:center;line-height:28px;height:26px;letter-spacing:-0.4px">壁挂楼层标志灯0F-9F之外(智能型)</div>
<div class="cell" style="left:1162px;top:483px;line-height:28px;height:26px;letter-spacing:0.15px">12106045582004</div>
<div class="cell" style="left:1313px;top:483px;line-height:28px;height:26px;letter-spacing:0.35px">临波庭8号楼/401-1单元</div>
<div class="a" style="left:8px;top:510px;width:1500px;height:25px;background:#e8e8e8"></div>
<div class="a" style="left:8px;top:535px;width:1500px;height:1px;background:#a0a0a0"></div>
<div class="a" style="left:0;top:535px;width:8px;height:1px;background:#dcdcdc"></div>
<div class="gc" style="left:130px;top:512px;width:44px;height:22px"></div>
<div class="gc" style="left:177px;top:512px;width:45px;height:22px"></div>
<div class="gc" style="left:520px;top:512px;width:79px;height:22px"></div>
<div class="vl" style="left:46px;top:510px;height:26px"></div>
<div class="vl" style="left:128px;top:510px;height:26px"></div>
<div class="vl" style="left:175px;top:510px;height:26px"></div>
<div class="vl" style="left:223px;top:510px;height:26px"></div>
<div class="vl" style="left:270px;top:510px;height:26px"></div>
<div class="vl" style="left:353px;top:510px;height:26px"></div>
<div class="vl" style="left:435px;top:510px;height:26px"></div>
<div class="vl" style="left:518px;top:510px;height:26px"></div>
<div class="vl" style="left:600px;top:510px;height:26px"></div>
<div class="vl" style="left:877px;top:510px;height:26px"></div>
<div class="vl" style="left:1157px;top:510px;height:26px"></div>
<div class="vl" style="left:1309px;top:510px;height:26px"></div>
<div class="cell" style="left:12px;top:510px;line-height:27px;height:25px;">109</div>
<div class="cell" style="left:52px;top:510px;line-height:27px;height:25px;">通讯正常</div>
<div class="cell" style="left:134px;top:510px;line-height:27px;height:25px;">正常</div>
<div class="cell" style="left:181px;top:510px;line-height:27px;height:25px;">正常</div>
<div class="cell" style="left:227px;top:510px;line-height:27px;height:25px;">无</div>
<div class="cell" style="left:275px;top:510px;line-height:27px;height:25px;">0</div>
<div class="cell" style="left:358px;top:510px;line-height:27px;height:25px;">0</div>
<div class="cell" style="left:440px;top:510px;line-height:27px;height:25px;">20</div>
<div class="cell" style="left:520px;top:510px;width:79px;text-align:center;line-height:27px;height:25px">20</div>
<div class="cell" style="left:605px;top:510px;line-height:27px;height:25px;letter-spacing:-0.4px">壁挂楼层标志灯0F-9F(智能型)</div>
<div class="cell" style="left:878px;top:510px;width:279px;text-align:center;line-height:27px;height:25px;letter-spacing:-0.4px">壁挂楼层标志灯0F-9F(智能型)</div>
<div class="cell" style="left:1162px;top:510px;line-height:27px;height:25px;letter-spacing:0.15px">12106022245311</div>
<div class="cell" style="left:1313px;top:510px;line-height:27px;height:25px;letter-spacing:0.35px">临波庭8号楼/401-1单元</div>
<div class="a" style="left:8px;top:536px;width:1500px;height:26px;background:#ffffff"></div>
<div class="a" style="left:8px;top:562px;width:1500px;height:1px;background:#a0a0a0"></div>
<div class="a" style="left:0;top:562px;width:8px;height:1px;background:#dcdcdc"></div>
<div class="gc" style="left:130px;top:538px;width:44px;height:23px"></div>
<div class="gc" style="left:177px;top:538px;width:45px;height:23px"></div>
<div class="gc" style="left:520px;top:538px;width:79px;height:23px"></div>
<div class="vl" style="left:46px;top:536px;height:27px"></div>
<div class="vl" style="left:128px;top:536px;height:27px"></div>
<div class="vl" style="left:175px;top:536px;height:27px"></div>
<div class="vl" style="left:223px;top:536px;height:27px"></div>
<div class="vl" style="left:270px;top:536px;height:27px"></div>
<div class="vl" style="left:353px;top:536px;height:27px"></div>
<div class="vl" style="left:435px;top:536px;height:27px"></div>
<div class="vl" style="left:518px;top:536px;height:27px"></div>
<div class="vl" style="left:600px;top:536px;height:27px"></div>
<div class="vl" style="left:877px;top:536px;height:27px"></div>
<div class="vl" style="left:1157px;top:536px;height:27px"></div>
<div class="vl" style="left:1309px;top:536px;height:27px"></div>
<div class="cell" style="left:12px;top:536px;line-height:28px;height:26px;">110</div>
<div class="cell" style="left:52px;top:536px;line-height:28px;height:26px;">通讯正常</div>
<div class="cell" style="left:134px;top:536px;line-height:28px;height:26px;">正常</div>
<div class="cell" style="left:181px;top:536px;line-height:28px;height:26px;">正常</div>
<div class="cell" style="left:227px;top:536px;line-height:28px;height:26px;">左向</div>
<div class="cell" style="left:275px;top:536px;line-height:28px;height:26px;">0</div>
<div class="cell" style="left:358px;top:536px;line-height:28px;height:26px;">0</div>
<div class="cell" style="left:440px;top:536px;line-height:28px;height:26px;">21</div>
<div class="cell" style="left:520px;top:536px;width:79px;text-align:center;line-height:28px;height:26px">21</div>
<div class="cell" style="left:605px;top:536px;line-height:28px;height:26px;letter-spacing:-0.4px">壁挂左向标志灯(智能型)</div>
<div class="cell" style="left:878px;top:536px;width:279px;text-align:center;line-height:28px;height:26px;letter-spacing:-0.4px">壁挂左向标志灯(智能型)</div>
<div class="cell" style="left:1162px;top:536px;line-height:28px;height:26px;letter-spacing:0.15px">7259011011</div>
<div class="cell" style="left:1313px;top:536px;line-height:28px;height:26px;letter-spacing:0.35px">临波庭8号楼/401-1单元</div>
<div class="a" style="left:8px;top:563px;width:1500px;height:26px;background:#e8e8e8"></div>
<div class="a" style="left:8px;top:589px;width:1500px;height:1px;background:#a0a0a0"></div>
<div class="a" style="left:0;top:589px;width:8px;height:1px;background:#dcdcdc"></div>
<div class="gc" style="left:130px;top:565px;width:44px;height:23px"></div>
<div class="gc" style="left:177px;top:565px;width:45px;height:23px"></div>
<div class="gc" style="left:520px;top:565px;width:79px;height:23px"></div>
<div class="vl" style="left:46px;top:563px;height:27px"></div>
<div class="vl" style="left:128px;top:563px;height:27px"></div>
<div class="vl" style="left:175px;top:563px;height:27px"></div>
<div class="vl" style="left:223px;top:563px;height:27px"></div>
<div class="vl" style="left:270px;top:563px;height:27px"></div>
<div class="vl" style="left:353px;top:563px;height:27px"></div>
<div class="vl" style="left:435px;top:563px;height:27px"></div>
<div class="vl" style="left:518px;top:563px;height:27px"></div>
<div class="vl" style="left:600px;top:563px;height:27px"></div>
<div class="vl" style="left:877px;top:563px;height:27px"></div>
<div class="vl" style="left:1157px;top:563px;height:27px"></div>
<div class="vl" style="left:1309px;top:563px;height:27px"></div>
<div class="cell" style="left:12px;top:563px;line-height:28px;height:26px;">111</div>
<div class="cell" style="left:52px;top:563px;line-height:28px;height:26px;">通讯正常</div>
<div class="cell" style="left:134px;top:563px;line-height:28px;height:26px;">正常</div>
<div class="cell" style="left:181px;top:563px;line-height:28px;height:26px;">正常</div>
<div class="cell" style="left:227px;top:563px;line-height:28px;height:26px;">无</div>
<div class="cell" style="left:275px;top:563px;line-height:28px;height:26px;">0</div>
<div class="cell" style="left:358px;top:563px;line-height:28px;height:26px;">0</div>
<div class="cell" style="left:440px;top:563px;line-height:28px;height:26px;">22</div>
<div class="cell" style="left:520px;top:563px;width:79px;text-align:center;line-height:28px;height:26px">22</div>
<div class="cell" style="left:605px;top:563px;line-height:28px;height:26px;">应急照明感应灯(12W)</div>
<div class="cell" style="left:878px;top:563px;width:279px;text-align:center;line-height:28px;height:26px;">应急照明感应灯(12W)</div>
<div class="cell" style="left:1162px;top:563px;line-height:28px;height:26px;letter-spacing:0.15px">12106022244063</div>
<div class="cell" style="left:1313px;top:563px;line-height:28px;height:26px;letter-spacing:0.35px">临波庭8号楼/401-1单元</div>
<div class="a" style="left:8px;top:590px;width:1500px;height:26px;background:#ffffff"></div>
<div class="a" style="left:8px;top:616px;width:1500px;height:1px;background:#a0a0a0"></div>
<div class="a" style="left:0;top:616px;width:8px;height:1px;background:#dcdcdc"></div>
<div class="gc" style="left:130px;top:592px;width:44px;height:23px"></div>
<div class="gc" style="left:177px;top:592px;width:45px;height:23px"></div>
<div class="gc" style="left:520px;top:592px;width:79px;height:23px"></div>
<div class="vl" style="left:46px;top:590px;height:27px"></div>
<div class="vl" style="left:128px;top:590px;height:27px"></div>
<div class="vl" style="left:175px;top:590px;height:27px"></div>
<div class="vl" style="left:223px;top:590px;height:27px"></div>
<div class="vl" style="left:270px;top:590px;height:27px"></div>
<div class="vl" style="left:353px;top:590px;height:27px"></div>
<div class="vl" style="left:435px;top:590px;height:27px"></div>
<div class="vl" style="left:518px;top:590px;height:27px"></div>
<div class="vl" style="left:600px;top:590px;height:27px"></div>
<div class="vl" style="left:877px;top:590px;height:27px"></div>
<div class="vl" style="left:1157px;top:590px;height:27px"></div>
<div class="vl" style="left:1309px;top:590px;height:27px"></div>
<div class="cell" style="left:12px;top:590px;line-height:28px;height:26px;">112</div>
<div class="cell" style="left:52px;top:590px;line-height:28px;height:26px;">通讯正常</div>
<div class="cell" style="left:134px;top:590px;line-height:28px;height:26px;">正常</div>
<div class="cell" style="left:181px;top:590px;line-height:28px;height:26px;">正常</div>
<div class="cell" style="left:227px;top:590px;line-height:28px;height:26px;">无</div>
<div class="cell" style="left:275px;top:590px;line-height:28px;height:26px;">0</div>
<div class="cell" style="left:358px;top:590px;line-height:28px;height:26px;">0</div>
<div class="cell" style="left:440px;top:590px;line-height:28px;height:26px;">23</div>
<div class="cell" style="left:520px;top:590px;width:79px;text-align:center;line-height:28px;height:26px">23</div>
<div class="cell" style="left:605px;top:590px;line-height:28px;height:26px;">应急照明感应灯(12W)</div>
<div class="cell" style="left:878px;top:590px;width:279px;text-align:center;line-height:28px;height:26px;">应急照明感应灯(12W)</div>
<div class="cell" style="left:1162px;top:590px;line-height:28px;height:26px;letter-spacing:0.15px">12106022243817</div>
<div class="cell" style="left:1313px;top:590px;line-height:28px;height:26px;letter-spacing:0.35px">临波庭8号楼/401-1单元</div>
<div class="a" style="left:8px;top:617px;width:1500px;height:26px;background:#e8e8e8"></div>
<div class="a" style="left:8px;top:643px;width:1500px;height:1px;background:#a0a0a0"></div>
<div class="a" style="left:0;top:643px;width:8px;height:1px;background:#dcdcdc"></div>
<div class="gc" style="left:130px;top:619px;width:44px;height:23px"></div>
<div class="gc" style="left:177px;top:619px;width:45px;height:23px"></div>
<div class="gc" style="left:520px;top:619px;width:79px;height:23px"></div>
<div class="vl" style="left:46px;top:617px;height:27px"></div>
<div class="vl" style="left:128px;top:617px;height:27px"></div>
<div class="vl" style="left:175px;top:617px;height:27px"></div>
<div class="vl" style="left:223px;top:617px;height:27px"></div>
<div class="vl" style="left:270px;top:617px;height:27px"></div>
<div class="vl" style="left:353px;top:617px;height:27px"></div>
<div class="vl" style="left:435px;top:617px;height:27px"></div>
<div class="vl" style="left:518px;top:617px;height:27px"></div>
<div class="vl" style="left:600px;top:617px;height:27px"></div>
<div class="vl" style="left:877px;top:617px;height:27px"></div>
<div class="vl" style="left:1157px;top:617px;height:27px"></div>
<div class="vl" style="left:1309px;top:617px;height:27px"></div>
<div class="cell" style="left:12px;top:617px;line-height:28px;height:26px;">113</div>
<div class="cell" style="left:52px;top:617px;line-height:28px;height:26px;">通讯正常</div>
<div class="cell" style="left:134px;top:617px;line-height:28px;height:26px;">正常</div>
<div class="cell" style="left:181px;top:617px;line-height:28px;height:26px;">正常</div>
<div class="cell" style="left:227px;top:617px;line-height:28px;height:26px;">无</div>
<div class="cell" style="left:275px;top:617px;line-height:28px;height:26px;">0</div>
<div class="cell" style="left:358px;top:617px;line-height:28px;height:26px;">0</div>
<div class="cell" style="left:440px;top:617px;line-height:28px;height:26px;">24</div>
<div class="cell" style="left:520px;top:617px;width:79px;text-align:center;line-height:28px;height:26px">24</div>
<div class="cell" style="left:605px;top:617px;line-height:28px;height:26px;">应急照明感应灯(12W)</div>
<div class="cell" style="left:878px;top:617px;width:279px;text-align:center;line-height:28px;height:26px;">应急照明感应灯(12W)</div>
<div class="cell" style="left:1162px;top:617px;line-height:28px;height:26px;letter-spacing:0.15px">12106022243819</div>
<div class="cell" style="left:1313px;top:617px;line-height:28px;height:26px;letter-spacing:0.35px">临波庭8号楼/401-1单元</div>
<div class="a" style="left:8px;top:644px;width:1500px;height:26px;background:#ffffff"></div>
<div class="a" style="left:8px;top:670px;width:1500px;height:1px;background:#a0a0a0"></div>
<div class="a" style="left:0;top:670px;width:8px;height:1px;background:#dcdcdc"></div>
<div class="gc" style="left:130px;top:646px;width:44px;height:23px"></div>
<div class="gc" style="left:177px;top:646px;width:45px;height:23px"></div>
<div class="gc" style="left:520px;top:646px;width:79px;height:23px"></div>
<div class="vl" style="left:46px;top:644px;height:27px"></div>
<div class="vl" style="left:128px;top:644px;height:27px"></div>
<div class="vl" style="left:175px;top:644px;height:27px"></div>
<div class="vl" style="left:223px;top:644px;height:27px"></div>
<div class="vl" style="left:270px;top:644px;height:27px"></div>
<div class="vl" style="left:353px;top:644px;height:27px"></div>
<div class="vl" style="left:435px;top:644px;height:27px"></div>
<div class="vl" style="left:518px;top:644px;height:27px"></div>
<div class="vl" style="left:600px;top:644px;height:27px"></div>
<div class="vl" style="left:877px;top:644px;height:27px"></div>
<div class="vl" style="left:1157px;top:644px;height:27px"></div>
<div class="vl" style="left:1309px;top:644px;height:27px"></div>
<div class="cell" style="left:12px;top:644px;line-height:28px;height:26px;">114</div>
<div class="cell" style="left:52px;top:644px;line-height:28px;height:26px;">通讯正常</div>
<div class="cell" style="left:134px;top:644px;line-height:28px;height:26px;">正常</div>
<div class="cell" style="left:181px;top:644px;line-height:28px;height:26px;">正常</div>
<div class="cell" style="left:227px;top:644px;line-height:28px;height:26px;">右向</div>
<div class="cell" style="left:275px;top:644px;line-height:28px;height:26px;">0</div>
<div class="cell" style="left:358px;top:644px;line-height:28px;height:26px;">0</div>
<div class="cell" style="left:440px;top:644px;line-height:28px;height:26px;">25</div>
<div class="cell" style="left:520px;top:644px;width:79px;text-align:center;line-height:28px;height:26px">25</div>
<div class="cell" style="left:605px;top:644px;line-height:28px;height:26px;letter-spacing:-0.4px">壁挂右向标志灯(智能型)</div>
<div class="cell" style="left:878px;top:644px;width:279px;text-align:center;line-height:28px;height:26px;letter-spacing:-0.4px">壁挂右向标志灯(智能型)</div>
<div class="cell" style="left:1162px;top:644px;line-height:28px;height:26px;letter-spacing:0.15px">7259020012</div>
<div class="cell" style="left:1313px;top:644px;line-height:28px;height:26px;letter-spacing:0.35px">临波庭8号楼/401-1单元</div>
<div class="a" style="left:8px;top:671px;width:1500px;height:26px;background:#e8e8e8"></div>
<div class="a" style="left:8px;top:697px;width:1500px;height:1px;background:#a0a0a0"></div>
<div class="a" style="left:0;top:697px;width:8px;height:1px;background:#dcdcdc"></div>
<div class="gc" style="left:130px;top:673px;width:44px;height:23px"></div>
<div class="gc" style="left:177px;top:673px;width:45px;height:23px"></div>
<div class="gc" style="left:520px;top:673px;width:79px;height:23px"></div>
<div class="vl" style="left:46px;top:671px;height:27px"></div>
<div class="vl" style="left:128px;top:671px;height:27px"></div>
<div class="vl" style="left:175px;top:671px;height:27px"></div>
<div class="vl" style="left:223px;top:671px;height:27px"></div>
<div class="vl" style="left:270px;top:671px;height:27px"></div>
<div class="vl" style="left:353px;top:671px;height:27px"></div>
<div class="vl" style="left:435px;top:671px;height:27px"></div>
<div class="vl" style="left:518px;top:671px;height:27px"></div>
<div class="vl" style="left:600px;top:671px;height:27px"></div>
<div class="vl" style="left:877px;top:671px;height:27px"></div>
<div class="vl" style="left:1157px;top:671px;height:27px"></div>
<div class="vl" style="left:1309px;top:671px;height:27px"></div>
<div class="cell" style="left:12px;top:671px;line-height:28px;height:26px;">115</div>
<div class="cell" style="left:52px;top:671px;line-height:28px;height:26px;">通讯正常</div>
<div class="cell" style="left:134px;top:671px;line-height:28px;height:26px;">正常</div>
<div class="cell" style="left:181px;top:671px;line-height:28px;height:26px;">正常</div>
<div class="cell" style="left:227px;top:671px;line-height:28px;height:26px;">无</div>
<div class="cell" style="left:275px;top:671px;line-height:28px;height:26px;">0</div>
<div class="cell" style="left:358px;top:671px;line-height:28px;height:26px;">0</div>
<div class="cell" style="left:440px;top:671px;line-height:28px;height:26px;">26</div>
<div class="cell" style="left:520px;top:671px;width:79px;text-align:center;line-height:28px;height:26px">26</div>
<div class="cell" style="left:605px;top:671px;line-height:28px;height:26px;">应急照明感应灯(12W)</div>
<div class="cell" style="left:878px;top:671px;width:279px;text-align:center;line-height:28px;height:26px;">应急照明感应灯(12W)</div>
<div class="cell" style="left:1162px;top:671px;line-height:28px;height:26px;letter-spacing:0.15px">12106022243822</div>
<div class="cell" style="left:1313px;top:671px;line-height:28px;height:26px;letter-spacing:0.35px">临波庭8号楼/401-1单元</div>
<div class="a" style="left:8px;top:698px;width:1500px;height:25px;background:#ffffff"></div>
<div class="a" style="left:8px;top:723px;width:1500px;height:1px;background:#a0a0a0"></div>
<div class="a" style="left:0;top:723px;width:8px;height:1px;background:#dcdcdc"></div>
<div class="gc" style="left:130px;top:700px;width:44px;height:22px"></div>
<div class="gc" style="left:177px;top:700px;width:45px;height:22px"></div>
<div class="gc" style="left:520px;top:700px;width:79px;height:22px"></div>
<div class="vl" style="left:46px;top:698px;height:26px"></div>
<div class="vl" style="left:128px;top:698px;height:26px"></div>
<div class="vl" style="left:175px;top:698px;height:26px"></div>
<div class="vl" style="left:223px;top:698px;height:26px"></div>
<div class="vl" style="left:270px;top:698px;height:26px"></div>
<div class="vl" style="left:353px;top:698px;height:26px"></div>
<div class="vl" style="left:435px;top:698px;height:26px"></div>
<div class="vl" style="left:518px;top:698px;height:26px"></div>
<div class="vl" style="left:600px;top:698px;height:26px"></div>
<div class="vl" style="left:877px;top:698px;height:26px"></div>
<div class="vl" style="left:1157px;top:698px;height:26px"></div>
<div class="vl" style="left:1309px;top:698px;height:26px"></div>
<div class="cell" style="left:12px;top:698px;line-height:27px;height:25px;">116</div>
<div class="cell" style="left:52px;top:698px;line-height:27px;height:25px;">通讯正常</div>
<div class="cell" style="left:134px;top:698px;line-height:27px;height:25px;">正常</div>
<div class="cell" style="left:181px;top:698px;line-height:27px;height:25px;">正常</div>
<div class="cell" style="left:227px;top:698px;line-height:27px;height:25px;">无</div>
<div class="cell" style="left:275px;top:698px;line-height:27px;height:25px;">0</div>
<div class="cell" style="left:358px;top:698px;line-height:27px;height:25px;">0</div>
<div class="cell" style="left:440px;top:698px;line-height:27px;height:25px;">27</div>
<div class="cell" style="left:520px;top:698px;width:79px;text-align:center;line-height:27px;height:25px">27</div>
<div class="cell" style="left:605px;top:698px;line-height:27px;height:25px;">应急照明感应灯(12W)</div>
<div class="cell" style="left:878px;top:698px;width:279px;text-align:center;line-height:27px;height:25px;">应急照明感应灯(12W)</div>
<div class="cell" style="left:1162px;top:698px;line-height:27px;height:25px;letter-spacing:0.15px">12106022243823</div>
<div class="cell" style="left:1313px;top:698px;line-height:27px;height:25px;letter-spacing:0.35px">临波庭8号楼/401-1单元</div>
<div class="a" style="left:8px;top:724px;width:1500px;height:26px;background:#e8e8e8"></div>
<div class="a" style="left:8px;top:750px;width:1500px;height:1px;background:#a0a0a0"></div>
<div class="a" style="left:0;top:750px;width:8px;height:1px;background:#dcdcdc"></div>
<div class="gc" style="left:130px;top:726px;width:44px;height:23px"></div>
<div class="gc" style="left:177px;top:726px;width:45px;height:23px"></div>
<div class="gc" style="left:520px;top:726px;width:79px;height:23px"></div>
<div class="vl" style="left:46px;top:724px;height:27px"></div>
<div class="vl" style="left:128px;top:724px;height:27px"></div>
<div class="vl" style="left:175px;top:724px;height:27px"></div>
<div class="vl" style="left:223px;top:724px;height:27px"></div>
<div class="vl" style="left:270px;top:724px;height:27px"></div>
<div class="vl" style="left:353px;top:724px;height:27px"></div>
<div class="vl" style="left:435px;top:724px;height:27px"></div>
<div class="vl" style="left:518px;top:724px;height:27px"></div>
<div class="vl" style="left:600px;top:724px;height:27px"></div>
<div class="vl" style="left:877px;top:724px;height:27px"></div>
<div class="vl" style="left:1157px;top:724px;height:27px"></div>
<div class="vl" style="left:1309px;top:724px;height:27px"></div>
<div class="cell" style="left:12px;top:724px;line-height:28px;height:26px;">117</div>
<div class="cell" style="left:52px;top:724px;line-height:28px;height:26px;">通讯正常</div>
<div class="cell" style="left:134px;top:724px;line-height:28px;height:26px;">正常</div>
<div class="cell" style="left:181px;top:724px;line-height:28px;height:26px;">正常</div>
<div class="cell" style="left:227px;top:724px;line-height:28px;height:26px;">无</div>
<div class="cell" style="left:275px;top:724px;line-height:28px;height:26px;">0</div>
<div class="cell" style="left:358px;top:724px;line-height:28px;height:26px;">0</div>
<div class="cell" style="left:440px;top:724px;line-height:28px;height:26px;">28</div>
<div class="cell" style="left:520px;top:724px;width:79px;text-align:center;line-height:28px;height:26px">28</div>
<div class="cell" style="left:605px;top:724px;line-height:28px;height:26px;">应急照明感应灯(12W)</div>
<div class="cell" style="left:878px;top:724px;width:279px;text-align:center;line-height:28px;height:26px;">应急照明感应灯(12W)</div>
<div class="cell" style="left:1162px;top:724px;line-height:28px;height:26px;letter-spacing:0.15px">12106022243824</div>
<div class="cell" style="left:1313px;top:724px;line-height:28px;height:26px;letter-spacing:0.35px">临波庭8号楼/401-1单元</div>
<div class="a" style="left:8px;top:751px;width:1500px;height:26px;background:#ffffff"></div>
<div class="a" style="left:8px;top:777px;width:1500px;height:1px;background:#a0a0a0"></div>
<div class="a" style="left:0;top:777px;width:8px;height:1px;background:#dcdcdc"></div>
<div class="gc" style="left:130px;top:753px;width:44px;height:23px"></div>
<div class="gc" style="left:177px;top:753px;width:45px;height:23px"></div>
<div class="gc" style="left:520px;top:753px;width:79px;height:23px"></div>
<div class="vl" style="left:46px;top:751px;height:27px"></div>
<div class="vl" style="left:128px;top:751px;height:27px"></div>
<div class="vl" style="left:175px;top:751px;height:27px"></div>
<div class="vl" style="left:223px;top:751px;height:27px"></div>
<div class="vl" style="left:270px;top:751px;height:27px"></div>
<div class="vl" style="left:353px;top:751px;height:27px"></div>
<div class="vl" style="left:435px;top:751px;height:27px"></div>
<div class="vl" style="left:518px;top:751px;height:27px"></div>
<div class="vl" style="left:600px;top:751px;height:27px"></div>
<div class="vl" style="left:877px;top:751px;height:27px"></div>
<div class="vl" style="left:1157px;top:751px;height:27px"></div>
<div class="vl" style="left:1309px;top:751px;height:27px"></div>
<div class="cell" style="left:12px;top:751px;line-height:28px;height:26px;">118</div>
<div class="cell" style="left:52px;top:751px;line-height:28px;height:26px;">通讯正常</div>
<div class="cell" style="left:134px;top:751px;line-height:28px;height:26px;">正常</div>
<div class="cell" style="left:181px;top:751px;line-height:28px;height:26px;">正常</div>
<div class="cell" style="left:227px;top:751px;line-height:28px;height:26px;">无</div>
<div class="cell" style="left:275px;top:751px;line-height:28px;height:26px;">0</div>
<div class="cell" style="left:358px;top:751px;line-height:28px;height:26px;">0</div>
<div class="cell" style="left:440px;top:751px;line-height:28px;height:26px;">29</div>
<div class="cell" style="left:520px;top:751px;width:79px;text-align:center;line-height:28px;height:26px">29</div>
<div class="cell" style="left:605px;top:751px;line-height:28px;height:26px;">应急照明感应灯(12W)</div>
<div class="cell" style="left:878px;top:751px;width:279px;text-align:center;line-height:28px;height:26px;">应急照明感应灯(12W)</div>
<div class="cell" style="left:1162px;top:751px;line-height:28px;height:26px;letter-spacing:0.15px">12106022243826</div>
<div class="cell" style="left:1313px;top:751px;line-height:28px;height:26px;letter-spacing:0.35px">临波庭8号楼/401-1单元</div>
<div class="a" style="left:8px;top:778px;width:1500px;height:26px;background:#e8e8e8"></div>
<div class="a" style="left:8px;top:804px;width:1500px;height:1px;background:#a0a0a0"></div>
<div class="a" style="left:0;top:804px;width:8px;height:1px;background:#dcdcdc"></div>
<div class="gc" style="left:130px;top:780px;width:44px;height:23px"></div>
<div class="gc" style="left:177px;top:780px;width:45px;height:23px"></div>
<div class="gc" style="left:520px;top:780px;width:79px;height:23px"></div>
<div class="vl" style="left:46px;top:778px;height:27px"></div>
<div class="vl" style="left:128px;top:778px;height:27px"></div>
<div class="vl" style="left:175px;top:778px;height:27px"></div>
<div class="vl" style="left:223px;top:778px;height:27px"></div>
<div class="vl" style="left:270px;top:778px;height:27px"></div>
<div class="vl" style="left:353px;top:778px;height:27px"></div>
<div class="vl" style="left:435px;top:778px;height:27px"></div>
<div class="vl" style="left:518px;top:778px;height:27px"></div>
<div class="vl" style="left:600px;top:778px;height:27px"></div>
<div class="vl" style="left:877px;top:778px;height:27px"></div>
<div class="vl" style="left:1157px;top:778px;height:27px"></div>
<div class="vl" style="left:1309px;top:778px;height:27px"></div>
<div class="cell" style="left:12px;top:778px;line-height:28px;height:26px;">119</div>
<div class="cell" style="left:52px;top:778px;line-height:28px;height:26px;">通讯正常</div>
<div class="cell" style="left:134px;top:778px;line-height:28px;height:26px;">正常</div>
<div class="cell" style="left:181px;top:778px;line-height:28px;height:26px;">正常</div>
<div class="cell" style="left:227px;top:778px;line-height:28px;height:26px;">无</div>
<div class="cell" style="left:275px;top:778px;line-height:28px;height:26px;">0</div>
<div class="cell" style="left:358px;top:778px;line-height:28px;height:26px;">0</div>
<div class="cell" style="left:440px;top:778px;line-height:28px;height:26px;">30</div>
<div class="cell" style="left:520px;top:778px;width:79px;text-align:center;line-height:28px;height:26px">30</div>
<div class="cell" style="left:605px;top:778px;line-height:28px;height:26px;">应急照明感应灯(12W)</div>
<div class="cell" style="left:878px;top:778px;width:279px;text-align:center;line-height:28px;height:26px;">应急照明感应灯(12W)</div>
<div class="cell" style="left:1162px;top:778px;line-height:28px;height:26px;letter-spacing:0.15px">12106022243827</div>
<div class="cell" style="left:1313px;top:778px;line-height:28px;height:26px;letter-spacing:0.35px">临波庭8号楼/401-1单元</div>
<div class="a" style="left:8px;top:805px;width:1500px;height:26px;background:#ffffff"></div>
<div class="a" style="left:8px;top:831px;width:1500px;height:1px;background:#a0a0a0"></div>
<div class="a" style="left:0;top:831px;width:8px;height:1px;background:#dcdcdc"></div>
<div class="gc" style="left:130px;top:807px;width:44px;height:23px"></div>
<div class="gc" style="left:177px;top:807px;width:45px;height:23px"></div>
<div class="gc" style="left:520px;top:807px;width:79px;height:23px"></div>
<div class="vl" style="left:46px;top:805px;height:27px"></div>
<div class="vl" style="left:128px;top:805px;height:27px"></div>
<div class="vl" style="left:175px;top:805px;height:27px"></div>
<div class="vl" style="left:223px;top:805px;height:27px"></div>
<div class="vl" style="left:270px;top:805px;height:27px"></div>
<div class="vl" style="left:353px;top:805px;height:27px"></div>
<div class="vl" style="left:435px;top:805px;height:27px"></div>
<div class="vl" style="left:518px;top:805px;height:27px"></div>
<div class="vl" style="left:600px;top:805px;height:27px"></div>
<div class="vl" style="left:877px;top:805px;height:27px"></div>
<div class="vl" style="left:1157px;top:805px;height:27px"></div>
<div class="vl" style="left:1309px;top:805px;height:27px"></div>
<div class="cell" style="left:12px;top:805px;line-height:28px;height:26px;">120</div>
<div class="cell" style="left:52px;top:805px;line-height:28px;height:26px;">通讯正常</div>
<div class="cell" style="left:134px;top:805px;line-height:28px;height:26px;">正常</div>
<div class="cell" style="left:181px;top:805px;line-height:28px;height:26px;">正常</div>
<div class="cell" style="left:227px;top:805px;line-height:28px;height:26px;">无</div>
<div class="cell" style="left:275px;top:805px;line-height:28px;height:26px;">0</div>
<div class="cell" style="left:358px;top:805px;line-height:28px;height:26px;">0</div>
<div class="cell" style="left:440px;top:805px;line-height:28px;height:26px;">31</div>
<div class="cell" style="left:520px;top:805px;width:79px;text-align:center;line-height:28px;height:26px">31</div>
<div class="cell" style="left:605px;top:805px;line-height:28px;height:26px;">应急照明感应灯(12W)</div>
<div class="cell" style="left:878px;top:805px;width:279px;text-align:center;line-height:28px;height:26px;">应急照明感应灯(12W)</div>
<div class="cell" style="left:1162px;top:805px;line-height:28px;height:26px;letter-spacing:0.15px">12106022243828</div>
<div class="cell" style="left:1313px;top:805px;line-height:28px;height:26px;letter-spacing:0.35px">临波庭8号楼/401-1单元</div>
</div>
<div class="a" style="left:1894px;top:230px;width:21px;height:824px;background:#f0f0f0"></div>
<div class="a" style="left:1894px;top:251px;width:21px;height:616px;background:#cdcdcd"></div>
<div class="a" style="left:394px;top:1054px;width:1500px;height:21px;background:#f0f0f0"></div>
<div class="a" style="left:415px;top:1054px;width:1076px;height:21px;background:#cdcdcd"></div>
<div class="a" style="left:1894px;top:1054px;width:21px;height:21px;background:#eef5fc"></div>
<svg class="a" style="left:0;top:0;pointer-events:none" width="1920" height="1080"><path d="M1900.0 242.0 L1904.0 238.0 L1908.0 242.0" fill="none" stroke="#8a8a8a" stroke-width="1.6"/><path d="M1900.0 1042.0 L1904.0 1046.0 L1908.0 1042.0" fill="none" stroke="#8a8a8a" stroke-width="1.6"/><path d="M407.0 1060.0 L403.0 1064.0 L407.0 1068.0" fill="none" stroke="#8a8a8a" stroke-width="1.6"/><path d="M1882.0 1060.0 L1886.0 1064.0 L1882.0 1068.0" fill="none" stroke="#8a8a8a" stroke-width="1.6"/></svg>
</body></html>
